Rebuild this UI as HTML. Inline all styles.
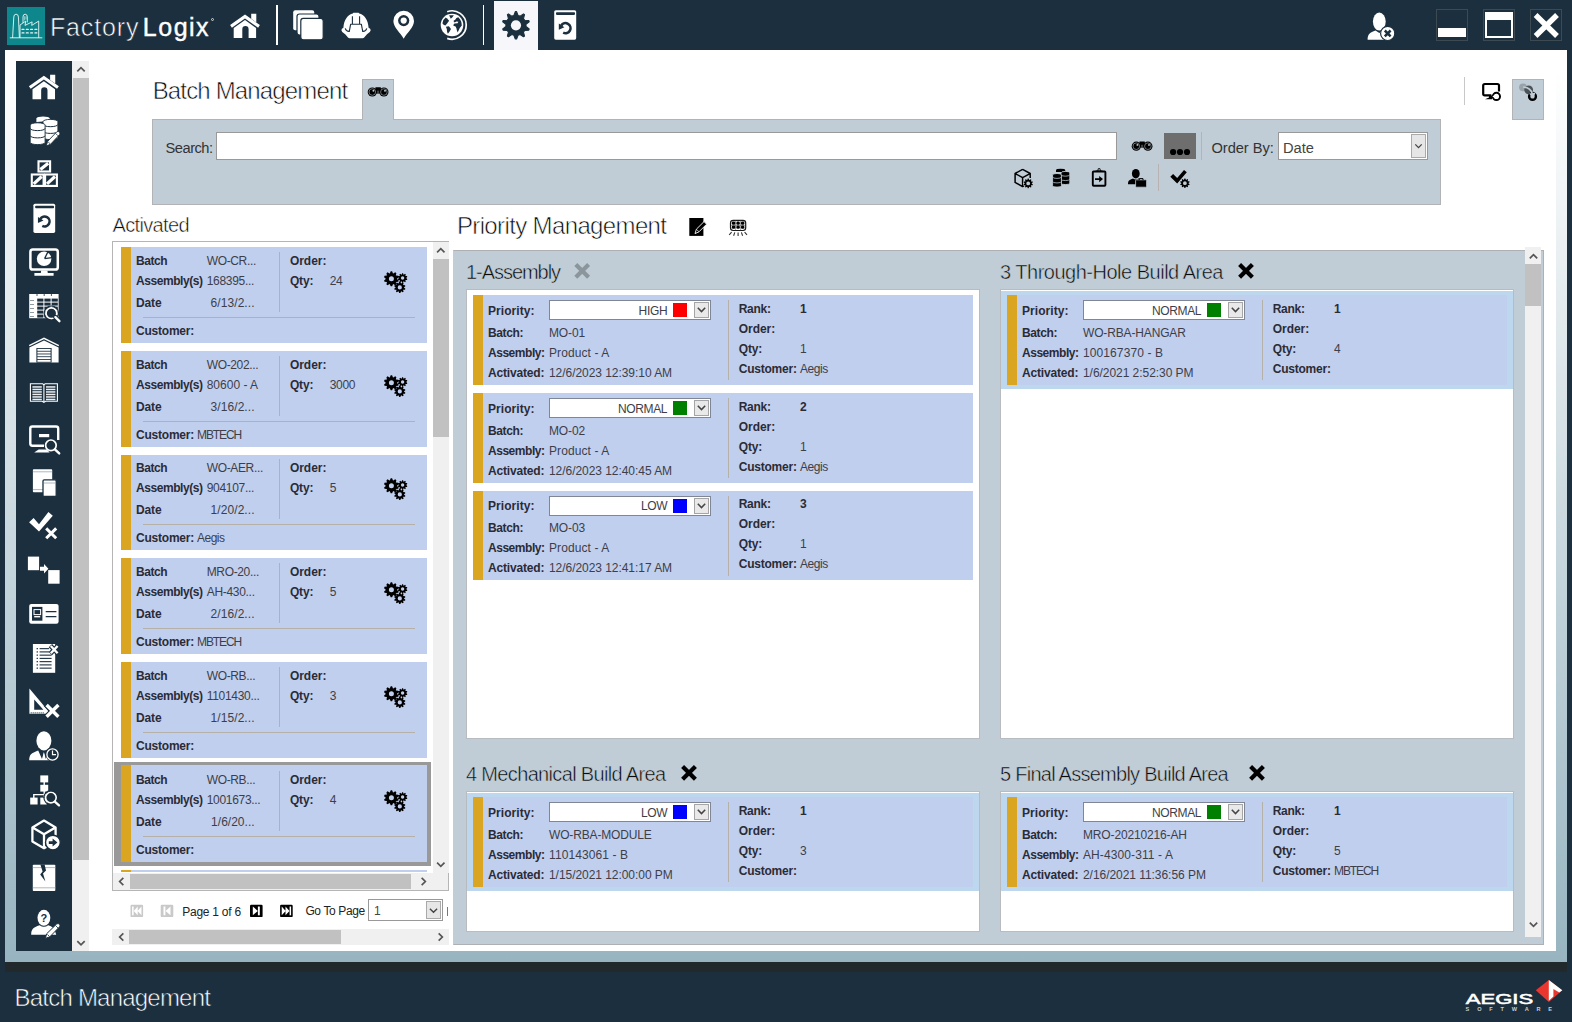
<!DOCTYPE html>
<html lang="en"><head><meta charset="utf-8"><title>FactoryLogix - Batch Management</title>
<style>
html,body{margin:0;padding:0}
body{width:1572px;height:1022px;background:#1b2f3e;position:relative;overflow:hidden;font-family:"Liberation Sans", sans-serif;font-size:12px;color:#222}
.a{position:absolute;box-sizing:border-box}
.t{position:absolute;white-space:nowrap;line-height:1}
svg{display:block;overflow:visible}
</style></head>
<body>
<div class="a" style="left:5px;top:50px;width:1562px;height:912px;background:linear-gradient(#ffffff 0%,#ffffff 2%,#97b4c0 100%);"></div>
<div class="a" style="left:16px;top:50px;width:1540px;height:901px;background:#fff;"></div>
<div class="a" style="left:5px;top:962px;width:1562px;height:10px;background:#21292c;"></div>
<div class="a" style="left:7px;top:7px;width:38px;height:38px;background:#0e878c;"></div>
<span class="t" style="left:50px;top:14.74px;font-size:25px;color:#ffffff;"><span style="color:#ffffff;letter-spacing:0.84px;-webkit-text-stroke:0.6px #1b2f3e">Factory</span><span style="-webkit-text-stroke:0.4px #fff;margin-left:3.6px;letter-spacing:1.5px">Logix</span></span>
<div class="a" style="left:211px;top:18px;width:3px;height:3px;border:1px solid #cfd6db;border-radius:50%;"></div>
<div class="a" style="left:276px;top:5px;width:1.6px;height:40px;background:#ffffff;"></div>
<div class="a" style="left:482.6px;top:5px;width:1.6px;height:40px;background:#ffffff;"></div>
<div class="a" style="left:494px;top:1px;width:44px;height:49px;background:#f7f7fb;"></div>
<div class="a" style="left:1436px;top:9px;width:32px;height:32px;border:1px solid #3e4a52;"></div>
<div class="a" style="left:1483px;top:9px;width:32px;height:32px;border:1px solid #3e4a52;"></div>
<div class="a" style="left:1530px;top:9px;width:32px;height:32px;border:1px solid #3e4a52;"></div>
<div class="a" style="left:1438px;top:28px;width:28px;height:9px;background:#fff;"></div>
<div class="a" style="left:1485px;top:12px;width:28px;height:26px;border:2px solid #fff;border-top-width:8px;"></div>
<div class="a" style="left:16px;top:61px;width:56px;height:890px;background:#1b2f3e;"></div>
<div class="a" style="left:72px;top:61px;width:17px;height:890px;background:#f0f0f0;"></div>
<div class="a" style="left:73px;top:78px;width:16px;height:782px;background:#c1c1c1;"></div>
<span class="t" style="left:152.7px;top:78.98px;font-size:24px;color:#0a0a0a;letter-spacing:-0.845px;-webkit-text-stroke:0.6px #fff;">Batch Management</span>
<div class="a" style="left:362px;top:79px;width:32px;height:41px;background:#c0cdd6;border:1px solid #b1b3b5;border-bottom:none;"></div>
<div class="a" style="left:152px;top:119px;width:1289px;height:86px;background:#c0cdd6;border:1px solid #b1b3b5;"></div>
<div class="a" style="left:363px;top:118px;width:30px;height:3px;background:#c0cdd6;"></div>
<span class="t" style="left:165.6px;top:140.98px;font-size:14.67px;color:#333;letter-spacing:-0.502px;">Search:</span>
<div class="a" style="left:216px;top:132px;width:901px;height:28px;background:#fff;border:1px solid #999;"></div>
<div class="a" style="left:1164px;top:133px;width:32px;height:26px;background:#6e6e6e;"></div>
<div class="a" style="left:1201px;top:132px;width:1px;height:28px;background:#b9b2b2;"></div>
<span class="t" style="left:1211.5px;top:140.98px;font-size:14.67px;color:#333;letter-spacing:-0.058px;">Order By:</span>
<div class="a" style="left:1278px;top:132px;width:150px;height:28px;background:#fff;border:1px solid #999;"></div>
<span class="t" style="left:1283px;top:140.98px;font-size:14.67px;color:#444;letter-spacing:0.008px;">Date</span>
<div class="a" style="left:1411px;top:134px;width:15px;height:24px;background:#e6e6e6;border:1px solid #aaa;"></div>
<div class="a" style="left:1158px;top:164px;width:1px;height:27px;background:#b9b2b2;"></div>
<div class="a" style="left:1464px;top:77px;width:1px;height:28px;background:#c8c8c8;"></div>
<div class="a" style="left:1512px;top:79px;width:32px;height:41px;background:#c0cdd6;border:1px solid #b1b3b5;"></div>
<span class="t" style="left:112.5px;top:214.87px;font-size:20px;color:#0a0a0a;letter-spacing:-0.652px;-webkit-text-stroke:0.5px #fff;">Activated</span>
<div class="a" style="left:112px;top:241px;width:337.4px;height:650px;background:#fff;border:1px solid #b5b5b5;"></div>
<div class="a" style="left:432.6px;top:242px;width:16px;height:631px;background:#f0f0f0;"></div>
<div class="a" style="left:433.4px;top:259px;width:15.2px;height:178px;background:#c1c1c1;"></div>
<div class="a" style="left:113px;top:873px;width:335.4px;height:17px;background:#f0f0f0;"></div>
<div class="a" style="left:130px;top:874px;width:281px;height:15px;background:#c1c1c1;"></div>
<div class="a" style="left:121px;top:247px;width:306px;height:95.6px;background:#c0cfee;"></div>
<div class="a" style="left:121px;top:247px;width:10px;height:95.6px;background:#daa520;"></div>
<div class="a" style="left:279px;top:252px;width:1px;height:60px;background:#b5b0a8;"></div>
<div class="a" style="left:143px;top:317px;width:272px;height:1px;background:#b5b0a8;"></div>
<span class="t" style="left:136px;top:255.14px;font-size:12px;font-weight:700;color:#2b2b36;letter-spacing:-0.469px;">Batch</span>
<span class="t" style="left:136px;top:275.14px;font-size:12px;font-weight:700;color:#2b2b36;letter-spacing:-0.443px;">Assembly(s)</span>
<span class="t" style="left:136px;top:296.84px;font-size:12px;font-weight:700;color:#2b2b36;letter-spacing:-0.129px;">Date</span>
<span class="t" style="left:136px;top:324.84px;font-size:12px;font-weight:700;color:#2b2b36;letter-spacing:-0.224px;">Customer:</span>
<span class="t" style="left:206.7px;top:255.14px;font-size:12px;color:#3e3e48;letter-spacing:-0.35px;">WO-CR...</span>
<span class="t" style="left:206.7px;top:275.14px;font-size:12px;color:#3e3e48;letter-spacing:-0.3px;">168395...</span>
<span class="t" style="left:210.6px;top:296.84px;font-size:12px;color:#3e3e48;letter-spacing:0.069px;">6/13/2...</span>
<span class="t" style="left:289.9px;top:255.14px;font-size:12px;font-weight:700;color:#2b2b36;letter-spacing:-0.031px;">Order:</span>
<span class="t" style="left:289.9px;top:275.14px;font-size:12px;font-weight:700;color:#2b2b36;letter-spacing:-0.125px;">Qty:</span>
<span class="t" style="left:329.8px;top:275.14px;font-size:12px;color:#3e3e48;letter-spacing:-0.35px;">24</span>
<div class="a" style="left:121px;top:351px;width:306px;height:95.6px;background:#c0cfee;"></div>
<div class="a" style="left:121px;top:351px;width:10px;height:95.6px;background:#daa520;"></div>
<div class="a" style="left:279px;top:356px;width:1px;height:60px;background:#b5b0a8;"></div>
<div class="a" style="left:143px;top:421px;width:272px;height:1px;background:#b5b0a8;"></div>
<span class="t" style="left:136px;top:359.14px;font-size:12px;font-weight:700;color:#2b2b36;letter-spacing:-0.469px;">Batch</span>
<span class="t" style="left:136px;top:379.14px;font-size:12px;font-weight:700;color:#2b2b36;letter-spacing:-0.443px;">Assembly(s)</span>
<span class="t" style="left:136px;top:400.84px;font-size:12px;font-weight:700;color:#2b2b36;letter-spacing:-0.129px;">Date</span>
<span class="t" style="left:136px;top:428.84px;font-size:12px;font-weight:700;color:#2b2b36;letter-spacing:-0.224px;">Customer:</span>
<span class="t" style="left:206.7px;top:359.14px;font-size:12px;color:#3e3e48;letter-spacing:-0.35px;">WO-202...</span>
<span class="t" style="left:206.7px;top:379.14px;font-size:12px;color:#3e3e48;letter-spacing:0.003px;">80600 - A</span>
<span class="t" style="left:210.6px;top:400.84px;font-size:12px;color:#3e3e48;letter-spacing:0.069px;">3/16/2...</span>
<span class="t" style="left:289.9px;top:359.14px;font-size:12px;font-weight:700;color:#2b2b36;letter-spacing:-0.031px;">Order:</span>
<span class="t" style="left:289.9px;top:379.14px;font-size:12px;font-weight:700;color:#2b2b36;letter-spacing:-0.125px;">Qty:</span>
<span class="t" style="left:329.8px;top:379.14px;font-size:12px;color:#3e3e48;letter-spacing:-0.35px;">3000</span>
<span class="t" style="left:197px;top:428.84px;font-size:12px;color:#3e3e48;letter-spacing:-1.079px;">MBTECH</span>
<div class="a" style="left:121px;top:454.5px;width:306px;height:95.6px;background:#c0cfee;"></div>
<div class="a" style="left:121px;top:454.5px;width:10px;height:95.6px;background:#daa520;"></div>
<div class="a" style="left:279px;top:459px;width:1px;height:60px;background:#b5b0a8;"></div>
<div class="a" style="left:143px;top:524px;width:272px;height:1px;background:#b5b0a8;"></div>
<span class="t" style="left:136px;top:462.14px;font-size:12px;font-weight:700;color:#2b2b36;letter-spacing:-0.469px;">Batch</span>
<span class="t" style="left:136px;top:482.14px;font-size:12px;font-weight:700;color:#2b2b36;letter-spacing:-0.443px;">Assembly(s)</span>
<span class="t" style="left:136px;top:503.84px;font-size:12px;font-weight:700;color:#2b2b36;letter-spacing:-0.129px;">Date</span>
<span class="t" style="left:136px;top:531.84px;font-size:12px;font-weight:700;color:#2b2b36;letter-spacing:-0.224px;">Customer:</span>
<span class="t" style="left:206.7px;top:462.14px;font-size:12px;color:#3e3e48;letter-spacing:-0.35px;">WO-AER...</span>
<span class="t" style="left:206.7px;top:482.14px;font-size:12px;color:#3e3e48;letter-spacing:-0.3px;">904107...</span>
<span class="t" style="left:210.6px;top:503.84px;font-size:12px;color:#3e3e48;letter-spacing:0.069px;">1/20/2...</span>
<span class="t" style="left:289.9px;top:462.14px;font-size:12px;font-weight:700;color:#2b2b36;letter-spacing:-0.031px;">Order:</span>
<span class="t" style="left:289.9px;top:482.14px;font-size:12px;font-weight:700;color:#2b2b36;letter-spacing:-0.125px;">Qty:</span>
<span class="t" style="left:329.8px;top:482.14px;font-size:12px;color:#3e3e48;letter-spacing:-0.35px;">5</span>
<span class="t" style="left:197px;top:531.84px;font-size:12px;color:#3e3e48;letter-spacing:-0.506px;">Aegis</span>
<div class="a" style="left:121px;top:558.2px;width:306px;height:95.6px;background:#c0cfee;"></div>
<div class="a" style="left:121px;top:558.2px;width:10px;height:95.6px;background:#daa520;"></div>
<div class="a" style="left:279px;top:563px;width:1px;height:60px;background:#b5b0a8;"></div>
<div class="a" style="left:143px;top:628px;width:272px;height:1px;background:#b5b0a8;"></div>
<span class="t" style="left:136px;top:566.14px;font-size:12px;font-weight:700;color:#2b2b36;letter-spacing:-0.469px;">Batch</span>
<span class="t" style="left:136px;top:586.14px;font-size:12px;font-weight:700;color:#2b2b36;letter-spacing:-0.443px;">Assembly(s)</span>
<span class="t" style="left:136px;top:607.84px;font-size:12px;font-weight:700;color:#2b2b36;letter-spacing:-0.129px;">Date</span>
<span class="t" style="left:136px;top:635.84px;font-size:12px;font-weight:700;color:#2b2b36;letter-spacing:-0.224px;">Customer:</span>
<span class="t" style="left:206.7px;top:566.14px;font-size:12px;color:#3e3e48;letter-spacing:-0.35px;">MRO-20...</span>
<span class="t" style="left:206.7px;top:586.14px;font-size:12px;color:#3e3e48;letter-spacing:-0.3px;">AH-430...</span>
<span class="t" style="left:210.6px;top:607.84px;font-size:12px;color:#3e3e48;letter-spacing:0.069px;">2/16/2...</span>
<span class="t" style="left:289.9px;top:566.14px;font-size:12px;font-weight:700;color:#2b2b36;letter-spacing:-0.031px;">Order:</span>
<span class="t" style="left:289.9px;top:586.14px;font-size:12px;font-weight:700;color:#2b2b36;letter-spacing:-0.125px;">Qty:</span>
<span class="t" style="left:329.8px;top:586.14px;font-size:12px;color:#3e3e48;letter-spacing:-0.35px;">5</span>
<span class="t" style="left:197px;top:635.84px;font-size:12px;color:#3e3e48;letter-spacing:-1.079px;">MBTECH</span>
<div class="a" style="left:121px;top:662.3px;width:306px;height:95.6px;background:#c0cfee;"></div>
<div class="a" style="left:121px;top:662.3px;width:10px;height:95.6px;background:#daa520;"></div>
<div class="a" style="left:279px;top:667px;width:1px;height:60px;background:#b5b0a8;"></div>
<div class="a" style="left:143px;top:732px;width:272px;height:1px;background:#b5b0a8;"></div>
<span class="t" style="left:136px;top:670.14px;font-size:12px;font-weight:700;color:#2b2b36;letter-spacing:-0.469px;">Batch</span>
<span class="t" style="left:136px;top:690.14px;font-size:12px;font-weight:700;color:#2b2b36;letter-spacing:-0.443px;">Assembly(s)</span>
<span class="t" style="left:136px;top:711.84px;font-size:12px;font-weight:700;color:#2b2b36;letter-spacing:-0.129px;">Date</span>
<span class="t" style="left:136px;top:739.84px;font-size:12px;font-weight:700;color:#2b2b36;letter-spacing:-0.224px;">Customer:</span>
<span class="t" style="left:206.7px;top:670.14px;font-size:12px;color:#3e3e48;letter-spacing:-0.35px;">WO-RB...</span>
<span class="t" style="left:206.7px;top:690.14px;font-size:12px;color:#3e3e48;letter-spacing:-0.3px;">1101430...</span>
<span class="t" style="left:210.6px;top:711.84px;font-size:12px;color:#3e3e48;letter-spacing:0.069px;">1/15/2...</span>
<span class="t" style="left:289.9px;top:670.14px;font-size:12px;font-weight:700;color:#2b2b36;letter-spacing:-0.031px;">Order:</span>
<span class="t" style="left:289.9px;top:690.14px;font-size:12px;font-weight:700;color:#2b2b36;letter-spacing:-0.125px;">Qty:</span>
<span class="t" style="left:329.8px;top:690.14px;font-size:12px;color:#3e3e48;letter-spacing:-0.35px;">3</span>
<div class="a" style="left:114px;top:762px;width:317px;height:104px;background:#999;"></div>
<div class="a" style="left:121px;top:765.2px;width:306px;height:96.8px;background:#c0cfee;"></div>
<div class="a" style="left:121px;top:765.2px;width:10px;height:96.8px;background:#daa520;"></div>
<div class="a" style="left:279px;top:771px;width:1px;height:60px;background:#b5b0a8;"></div>
<div class="a" style="left:143px;top:836px;width:272px;height:1px;background:#b5b0a8;"></div>
<span class="t" style="left:136px;top:774.14px;font-size:12px;font-weight:700;color:#2b2b36;letter-spacing:-0.469px;">Batch</span>
<span class="t" style="left:136px;top:794.14px;font-size:12px;font-weight:700;color:#2b2b36;letter-spacing:-0.443px;">Assembly(s)</span>
<span class="t" style="left:136px;top:815.84px;font-size:12px;font-weight:700;color:#2b2b36;letter-spacing:-0.129px;">Date</span>
<span class="t" style="left:136px;top:843.84px;font-size:12px;font-weight:700;color:#2b2b36;letter-spacing:-0.224px;">Customer:</span>
<span class="t" style="left:206.7px;top:774.14px;font-size:12px;color:#3e3e48;letter-spacing:-0.35px;">WO-RB...</span>
<span class="t" style="left:206.7px;top:794.14px;font-size:12px;color:#3e3e48;letter-spacing:-0.3px;">1001673...</span>
<span class="t" style="left:211.1px;top:815.84px;font-size:12px;color:#3e3e48;letter-spacing:0.014px;">1/6/20...</span>
<span class="t" style="left:289.9px;top:774.14px;font-size:12px;font-weight:700;color:#2b2b36;letter-spacing:-0.031px;">Order:</span>
<span class="t" style="left:289.9px;top:794.14px;font-size:12px;font-weight:700;color:#2b2b36;letter-spacing:-0.125px;">Qty:</span>
<span class="t" style="left:329.8px;top:794.14px;font-size:12px;color:#3e3e48;letter-spacing:-0.35px;">4</span>
<div class="a" style="left:121px;top:870px;width:306px;height:2px;background:#c0cfee;"></div>
<div class="a" style="left:121px;top:870px;width:10px;height:2px;background:#daa520;"></div>
<span class="t" style="left:182.3px;top:905.64px;font-size:12px;color:#222;letter-spacing:-0.263px;">Page 1 of 6</span>
<span class="t" style="left:305.4px;top:904.84px;font-size:12px;color:#222;letter-spacing:-0.367px;">Go To Page</span>
<div class="a" style="left:368px;top:899px;width:75px;height:22px;background:#fff;border:1px solid #999;"></div>
<span class="t" style="left:374px;top:904.84px;font-size:12px;color:#444;">1</span>
<div class="a" style="left:426px;top:901px;width:15px;height:18px;background:#e6e6e6;border:1px solid #aaa;"></div>
<div class="a" style="left:447px;top:907px;width:1px;height:9px;background:#c0603a;"></div>
<div class="a" style="left:112px;top:929px;width:337px;height:16px;background:#f0f0f0;"></div>
<div class="a" style="left:129px;top:930px;width:212px;height:14px;background:#c1c1c1;"></div>
<span class="t" style="left:456.9px;top:214.28px;font-size:24px;color:#0a0a0a;letter-spacing:-0.628px;-webkit-text-stroke:0.6px #fff;">Priority Management</span>
<div class="a" style="left:453px;top:250px;width:1091px;height:695px;background:#c0cdd6;border:1px solid #adb1b4;border-left-color:#c0cdd6;"></div>
<div class="a" style="left:1525px;top:247px;width:16px;height:690px;background:#f0f0f0;"></div>
<div class="a" style="left:1525px;top:264px;width:16px;height:42px;background:#c1c1c1;"></div>
<span class="t" style="left:466px;top:261.77px;font-size:20px;color:#0a0a0a;letter-spacing:-1.048px;-webkit-text-stroke:0.5px #c0cdd6;">1-Assembly</span>
<div class="a" style="left:466px;top:289px;width:514px;height:450px;background:#fff;border:1px solid #b8bcc0;"></div>
<div class="a" style="left:473px;top:295px;width:500px;height:89.7px;background:#c0cfee;"></div>
<div class="a" style="left:473px;top:295px;width:10px;height:89.7px;background:#daa520;"></div>
<div class="a" style="left:727.6px;top:300px;width:1px;height:80px;background:#b5b0a8;"></div>
<span class="t" style="left:488px;top:305.24px;font-size:12px;font-weight:700;color:#2b2b36;letter-spacing:0.054px;">Priority:</span>
<span class="t" style="left:488px;top:327.14px;font-size:12px;font-weight:700;color:#2b2b36;letter-spacing:-0.391px;">Batch:</span>
<span class="t" style="left:488px;top:347.24px;font-size:12px;font-weight:700;color:#2b2b36;letter-spacing:-0.467px;">Assembly:</span>
<span class="t" style="left:488px;top:366.64px;font-size:12px;font-weight:700;color:#2b2b36;letter-spacing:-0.172px;">Activated:</span>
<div class="a" style="left:549px;top:300px;width:162px;height:20px;background:#fff;border:1px solid #7f8797;"></div>
<span class="t" style="right:904.8px;top:305.24px;font-size:12px;color:#3e3e48;letter-spacing:-0.35px;">HIGH</span>
<div class="a" style="left:673px;top:303px;width:14px;height:14px;background:#ff0000;"></div>
<div class="a" style="left:694px;top:301.8px;width:15px;height:16.2px;background:#e9e9e9;border:1px solid #a5a5a5;"></div>
<svg class="a" style="left:697px;top:307px;" width="9" height="6" viewBox="0 0 9 6"><path d="M0.8 0.8 L4.5 4.6 L8.2 0.8" fill="none" stroke="#444" stroke-width="1.5"/></svg>
<span class="t" style="left:549px;top:327.14px;font-size:12px;color:#3e3e48;letter-spacing:-0.15px;">MO-01</span>
<span class="t" style="left:549px;top:347.24px;font-size:12px;color:#3e3e48;letter-spacing:0.1px;">Product - A</span>
<span class="t" style="left:549px;top:366.64px;font-size:12px;color:#3e3e48;letter-spacing:-0.05px;">12/6/2023 12:39:10 AM</span>
<span class="t" style="left:738.7px;top:303.04px;font-size:12px;font-weight:700;color:#2b2b36;letter-spacing:-0.269px;">Rank:</span>
<span class="t" style="left:738.7px;top:323.04px;font-size:12px;font-weight:700;color:#2b2b36;letter-spacing:-0.031px;">Order:</span>
<span class="t" style="left:738.7px;top:342.84px;font-size:12px;font-weight:700;color:#2b2b36;letter-spacing:-0.125px;">Qty:</span>
<span class="t" style="left:738.7px;top:362.84px;font-size:12px;font-weight:700;color:#2b2b36;letter-spacing:-0.224px;">Customer:</span>
<span class="t" style="left:800px;top:303.04px;font-size:12px;font-weight:700;color:#2b2b36;">1</span>
<span class="t" style="left:800px;top:342.84px;font-size:12px;color:#3e3e48;">1</span>
<span class="t" style="left:800px;top:362.84px;font-size:12px;color:#3e3e48;letter-spacing:-0.446px;">Aegis</span>
<div class="a" style="left:473px;top:393.3px;width:500px;height:89.4px;background:#c0cfee;"></div>
<div class="a" style="left:473px;top:393.3px;width:10px;height:89.4px;background:#daa520;"></div>
<div class="a" style="left:727.6px;top:398.3px;width:1px;height:80px;background:#b5b0a8;"></div>
<span class="t" style="left:488px;top:403.34px;font-size:12px;font-weight:700;color:#2b2b36;letter-spacing:0.054px;">Priority:</span>
<span class="t" style="left:488px;top:425.24px;font-size:12px;font-weight:700;color:#2b2b36;letter-spacing:-0.391px;">Batch:</span>
<span class="t" style="left:488px;top:445.34px;font-size:12px;font-weight:700;color:#2b2b36;letter-spacing:-0.467px;">Assembly:</span>
<span class="t" style="left:488px;top:464.74px;font-size:12px;font-weight:700;color:#2b2b36;letter-spacing:-0.172px;">Activated:</span>
<div class="a" style="left:549px;top:398.3px;width:162px;height:20px;background:#fff;border:1px solid #7f8797;"></div>
<span class="t" style="right:904.8px;top:403.34px;font-size:12px;color:#3e3e48;letter-spacing:-0.35px;">NORMAL</span>
<div class="a" style="left:673px;top:401.3px;width:14px;height:14px;background:#008000;"></div>
<div class="a" style="left:694px;top:400.1px;width:15px;height:16.2px;background:#e9e9e9;border:1px solid #a5a5a5;"></div>
<svg class="a" style="left:697px;top:405.3px;" width="9" height="6" viewBox="0 0 9 6"><path d="M0.8 0.8 L4.5 4.6 L8.2 0.8" fill="none" stroke="#444" stroke-width="1.5"/></svg>
<span class="t" style="left:549px;top:425.24px;font-size:12px;color:#3e3e48;letter-spacing:-0.15px;">MO-02</span>
<span class="t" style="left:549px;top:445.34px;font-size:12px;color:#3e3e48;letter-spacing:0.1px;">Product - A</span>
<span class="t" style="left:549px;top:464.74px;font-size:12px;color:#3e3e48;letter-spacing:-0.05px;">12/6/2023 12:40:45 AM</span>
<span class="t" style="left:738.7px;top:401.14px;font-size:12px;font-weight:700;color:#2b2b36;letter-spacing:-0.269px;">Rank:</span>
<span class="t" style="left:738.7px;top:421.14px;font-size:12px;font-weight:700;color:#2b2b36;letter-spacing:-0.031px;">Order:</span>
<span class="t" style="left:738.7px;top:440.94px;font-size:12px;font-weight:700;color:#2b2b36;letter-spacing:-0.125px;">Qty:</span>
<span class="t" style="left:738.7px;top:460.94px;font-size:12px;font-weight:700;color:#2b2b36;letter-spacing:-0.224px;">Customer:</span>
<span class="t" style="left:800px;top:401.14px;font-size:12px;font-weight:700;color:#2b2b36;">2</span>
<span class="t" style="left:800px;top:440.94px;font-size:12px;color:#3e3e48;">1</span>
<span class="t" style="left:800px;top:460.94px;font-size:12px;color:#3e3e48;letter-spacing:-0.446px;">Aegis</span>
<div class="a" style="left:473px;top:491.3px;width:500px;height:88.3px;background:#c0cfee;"></div>
<div class="a" style="left:473px;top:491.3px;width:10px;height:88.3px;background:#daa520;"></div>
<div class="a" style="left:727.6px;top:496.3px;width:1px;height:80px;background:#b5b0a8;"></div>
<span class="t" style="left:488px;top:500.44px;font-size:12px;font-weight:700;color:#2b2b36;letter-spacing:0.054px;">Priority:</span>
<span class="t" style="left:488px;top:522.34px;font-size:12px;font-weight:700;color:#2b2b36;letter-spacing:-0.391px;">Batch:</span>
<span class="t" style="left:488px;top:542.44px;font-size:12px;font-weight:700;color:#2b2b36;letter-spacing:-0.467px;">Assembly:</span>
<span class="t" style="left:488px;top:561.84px;font-size:12px;font-weight:700;color:#2b2b36;letter-spacing:-0.172px;">Activated:</span>
<div class="a" style="left:549px;top:496.3px;width:162px;height:20px;background:#fff;border:1px solid #7f8797;"></div>
<span class="t" style="right:904.8px;top:500.44px;font-size:12px;color:#3e3e48;letter-spacing:-0.35px;">LOW</span>
<div class="a" style="left:673px;top:499.3px;width:14px;height:14px;background:#0000ff;"></div>
<div class="a" style="left:694px;top:498.1px;width:15px;height:16.2px;background:#e9e9e9;border:1px solid #a5a5a5;"></div>
<svg class="a" style="left:697px;top:503.3px;" width="9" height="6" viewBox="0 0 9 6"><path d="M0.8 0.8 L4.5 4.6 L8.2 0.8" fill="none" stroke="#444" stroke-width="1.5"/></svg>
<span class="t" style="left:549px;top:522.34px;font-size:12px;color:#3e3e48;letter-spacing:-0.15px;">MO-03</span>
<span class="t" style="left:549px;top:542.44px;font-size:12px;color:#3e3e48;letter-spacing:0.1px;">Product - A</span>
<span class="t" style="left:549px;top:561.84px;font-size:12px;color:#3e3e48;letter-spacing:-0.05px;">12/6/2023 12:41:17 AM</span>
<span class="t" style="left:738.7px;top:498.24px;font-size:12px;font-weight:700;color:#2b2b36;letter-spacing:-0.269px;">Rank:</span>
<span class="t" style="left:738.7px;top:518.24px;font-size:12px;font-weight:700;color:#2b2b36;letter-spacing:-0.031px;">Order:</span>
<span class="t" style="left:738.7px;top:538.04px;font-size:12px;font-weight:700;color:#2b2b36;letter-spacing:-0.125px;">Qty:</span>
<span class="t" style="left:738.7px;top:558.04px;font-size:12px;font-weight:700;color:#2b2b36;letter-spacing:-0.224px;">Customer:</span>
<span class="t" style="left:800px;top:498.24px;font-size:12px;font-weight:700;color:#2b2b36;">3</span>
<span class="t" style="left:800px;top:538.04px;font-size:12px;color:#3e3e48;">1</span>
<span class="t" style="left:800px;top:558.04px;font-size:12px;color:#3e3e48;letter-spacing:-0.446px;">Aegis</span>
<span class="t" style="left:1000px;top:261.77px;font-size:20px;color:#0a0a0a;letter-spacing:-0.494px;-webkit-text-stroke:0.5px #c0cdd6;">3 Through-Hole Build Area</span>
<div class="a" style="left:1000px;top:289px;width:514px;height:450px;background:#fff;border:1px solid #b8bcc0;"></div>
<div class="a" style="left:1001px;top:290.5px;width:512px;height:98.5px;background:#bdd7ee;"></div>
<div class="a" style="left:1007px;top:295px;width:500px;height:89.7px;background:#c0cfee;"></div>
<div class="a" style="left:1007px;top:295px;width:10px;height:89.7px;background:#daa520;"></div>
<div class="a" style="left:1261.6px;top:300px;width:1px;height:80px;background:#b5b0a8;"></div>
<span class="t" style="left:1022px;top:305.24px;font-size:12px;font-weight:700;color:#2b2b36;letter-spacing:0.054px;">Priority:</span>
<span class="t" style="left:1022px;top:327.14px;font-size:12px;font-weight:700;color:#2b2b36;letter-spacing:-0.391px;">Batch:</span>
<span class="t" style="left:1022px;top:347.24px;font-size:12px;font-weight:700;color:#2b2b36;letter-spacing:-0.467px;">Assembly:</span>
<span class="t" style="left:1022px;top:366.64px;font-size:12px;font-weight:700;color:#2b2b36;letter-spacing:-0.172px;">Activated:</span>
<div class="a" style="left:1083px;top:300px;width:162px;height:20px;background:#fff;border:1px solid #7f8797;"></div>
<span class="t" style="right:370.79999999999995px;top:305.24px;font-size:12px;color:#3e3e48;letter-spacing:-0.35px;">NORMAL</span>
<div class="a" style="left:1207px;top:303px;width:14px;height:14px;background:#008000;"></div>
<div class="a" style="left:1228px;top:301.8px;width:15px;height:16.2px;background:#e9e9e9;border:1px solid #a5a5a5;"></div>
<svg class="a" style="left:1231px;top:307px;" width="9" height="6" viewBox="0 0 9 6"><path d="M0.8 0.8 L4.5 4.6 L8.2 0.8" fill="none" stroke="#444" stroke-width="1.5"/></svg>
<span class="t" style="left:1083px;top:327.14px;font-size:12px;color:#3e3e48;letter-spacing:-0.15px;">WO-RBA-HANGAR</span>
<span class="t" style="left:1083px;top:347.24px;font-size:12px;color:#3e3e48;letter-spacing:0.1px;">100167370 - B</span>
<span class="t" style="left:1083px;top:366.64px;font-size:12px;color:#3e3e48;letter-spacing:-0.05px;">1/6/2021 2:52:30 PM</span>
<span class="t" style="left:1272.7px;top:303.04px;font-size:12px;font-weight:700;color:#2b2b36;letter-spacing:-0.269px;">Rank:</span>
<span class="t" style="left:1272.7px;top:323.04px;font-size:12px;font-weight:700;color:#2b2b36;letter-spacing:-0.031px;">Order:</span>
<span class="t" style="left:1272.7px;top:342.84px;font-size:12px;font-weight:700;color:#2b2b36;letter-spacing:-0.125px;">Qty:</span>
<span class="t" style="left:1272.7px;top:362.84px;font-size:12px;font-weight:700;color:#2b2b36;letter-spacing:-0.224px;">Customer:</span>
<span class="t" style="left:1334px;top:303.04px;font-size:12px;font-weight:700;color:#2b2b36;">1</span>
<span class="t" style="left:1334px;top:342.84px;font-size:12px;color:#3e3e48;">4</span>
<span class="t" style="left:466px;top:763.77px;font-size:20px;color:#0a0a0a;letter-spacing:-0.660px;-webkit-text-stroke:0.5px #c0cdd6;">4 Mechanical Build Area</span>
<div class="a" style="left:466px;top:791px;width:514px;height:141px;background:#fff;border:1px solid #b8bcc0;"></div>
<div class="a" style="left:467px;top:792.5px;width:512px;height:98.5px;background:#bdd7ee;"></div>
<div class="a" style="left:473px;top:797px;width:500px;height:89.7px;background:#c0cfee;"></div>
<div class="a" style="left:473px;top:797px;width:10px;height:89.7px;background:#daa520;"></div>
<div class="a" style="left:727.6px;top:802px;width:1px;height:80px;background:#b5b0a8;"></div>
<span class="t" style="left:488px;top:807.24px;font-size:12px;font-weight:700;color:#2b2b36;letter-spacing:0.054px;">Priority:</span>
<span class="t" style="left:488px;top:829.14px;font-size:12px;font-weight:700;color:#2b2b36;letter-spacing:-0.391px;">Batch:</span>
<span class="t" style="left:488px;top:849.24px;font-size:12px;font-weight:700;color:#2b2b36;letter-spacing:-0.467px;">Assembly:</span>
<span class="t" style="left:488px;top:868.64px;font-size:12px;font-weight:700;color:#2b2b36;letter-spacing:-0.172px;">Activated:</span>
<div class="a" style="left:549px;top:802px;width:162px;height:20px;background:#fff;border:1px solid #7f8797;"></div>
<span class="t" style="right:904.8px;top:807.24px;font-size:12px;color:#3e3e48;letter-spacing:-0.35px;">LOW</span>
<div class="a" style="left:673px;top:805px;width:14px;height:14px;background:#0000ff;"></div>
<div class="a" style="left:694px;top:803.8px;width:15px;height:16.2px;background:#e9e9e9;border:1px solid #a5a5a5;"></div>
<svg class="a" style="left:697px;top:809px;" width="9" height="6" viewBox="0 0 9 6"><path d="M0.8 0.8 L4.5 4.6 L8.2 0.8" fill="none" stroke="#444" stroke-width="1.5"/></svg>
<span class="t" style="left:549px;top:829.14px;font-size:12px;color:#3e3e48;letter-spacing:-0.15px;">WO-RBA-MODULE</span>
<span class="t" style="left:549px;top:849.24px;font-size:12px;color:#3e3e48;letter-spacing:0.1px;">110143061 - B</span>
<span class="t" style="left:549px;top:868.64px;font-size:12px;color:#3e3e48;letter-spacing:-0.05px;">1/15/2021 12:00:00 PM</span>
<span class="t" style="left:738.7px;top:805.04px;font-size:12px;font-weight:700;color:#2b2b36;letter-spacing:-0.269px;">Rank:</span>
<span class="t" style="left:738.7px;top:825.04px;font-size:12px;font-weight:700;color:#2b2b36;letter-spacing:-0.031px;">Order:</span>
<span class="t" style="left:738.7px;top:844.84px;font-size:12px;font-weight:700;color:#2b2b36;letter-spacing:-0.125px;">Qty:</span>
<span class="t" style="left:738.7px;top:864.84px;font-size:12px;font-weight:700;color:#2b2b36;letter-spacing:-0.224px;">Customer:</span>
<span class="t" style="left:800px;top:805.04px;font-size:12px;font-weight:700;color:#2b2b36;">1</span>
<span class="t" style="left:800px;top:844.84px;font-size:12px;color:#3e3e48;">3</span>
<span class="t" style="left:1000px;top:763.77px;font-size:20px;color:#0a0a0a;letter-spacing:-0.737px;-webkit-text-stroke:0.5px #c0cdd6;">5 Final Assembly Build Area</span>
<div class="a" style="left:1000px;top:791px;width:514px;height:141px;background:#fff;border:1px solid #b8bcc0;"></div>
<div class="a" style="left:1001px;top:792.5px;width:512px;height:98.5px;background:#bdd7ee;"></div>
<div class="a" style="left:1007px;top:797px;width:500px;height:89.7px;background:#c0cfee;"></div>
<div class="a" style="left:1007px;top:797px;width:10px;height:89.7px;background:#daa520;"></div>
<div class="a" style="left:1261.6px;top:802px;width:1px;height:80px;background:#b5b0a8;"></div>
<span class="t" style="left:1022px;top:807.24px;font-size:12px;font-weight:700;color:#2b2b36;letter-spacing:0.054px;">Priority:</span>
<span class="t" style="left:1022px;top:829.14px;font-size:12px;font-weight:700;color:#2b2b36;letter-spacing:-0.391px;">Batch:</span>
<span class="t" style="left:1022px;top:849.24px;font-size:12px;font-weight:700;color:#2b2b36;letter-spacing:-0.467px;">Assembly:</span>
<span class="t" style="left:1022px;top:868.64px;font-size:12px;font-weight:700;color:#2b2b36;letter-spacing:-0.172px;">Activated:</span>
<div class="a" style="left:1083px;top:802px;width:162px;height:20px;background:#fff;border:1px solid #7f8797;"></div>
<span class="t" style="right:370.79999999999995px;top:807.24px;font-size:12px;color:#3e3e48;letter-spacing:-0.35px;">NORMAL</span>
<div class="a" style="left:1207px;top:805px;width:14px;height:14px;background:#008000;"></div>
<div class="a" style="left:1228px;top:803.8px;width:15px;height:16.2px;background:#e9e9e9;border:1px solid #a5a5a5;"></div>
<svg class="a" style="left:1231px;top:809px;" width="9" height="6" viewBox="0 0 9 6"><path d="M0.8 0.8 L4.5 4.6 L8.2 0.8" fill="none" stroke="#444" stroke-width="1.5"/></svg>
<span class="t" style="left:1083px;top:829.14px;font-size:12px;color:#3e3e48;letter-spacing:-0.15px;">MRO-20210216-AH</span>
<span class="t" style="left:1083px;top:849.24px;font-size:12px;color:#3e3e48;letter-spacing:0.1px;">AH-4300-311 - A</span>
<span class="t" style="left:1083px;top:868.64px;font-size:12px;color:#3e3e48;letter-spacing:-0.05px;">2/16/2021 11:36:56 PM</span>
<span class="t" style="left:1272.7px;top:805.04px;font-size:12px;font-weight:700;color:#2b2b36;letter-spacing:-0.269px;">Rank:</span>
<span class="t" style="left:1272.7px;top:825.04px;font-size:12px;font-weight:700;color:#2b2b36;letter-spacing:-0.031px;">Order:</span>
<span class="t" style="left:1272.7px;top:844.84px;font-size:12px;font-weight:700;color:#2b2b36;letter-spacing:-0.125px;">Qty:</span>
<span class="t" style="left:1272.7px;top:864.84px;font-size:12px;font-weight:700;color:#2b2b36;letter-spacing:-0.224px;">Customer:</span>
<span class="t" style="left:1334px;top:805.04px;font-size:12px;font-weight:700;color:#2b2b36;">1</span>
<span class="t" style="left:1334px;top:844.84px;font-size:12px;color:#3e3e48;">5</span>
<span class="t" style="left:1334px;top:864.84px;font-size:12px;color:#3e3e48;letter-spacing:-1.079px;">MBTECH</span>
<span class="t" style="left:14.6px;top:985.68px;font-size:24px;color:#ffffff;letter-spacing:-0.789px;-webkit-text-stroke:0.6px #1b2f3e;">Batch Management</span>
<svg class="a" style="left:0;top:0" width="1572" height="1022" viewBox="0 0 1572 1022"><g transform="translate(7 7) scale(1)"><g fill="none" stroke="#e9f6f6" stroke-width="0.9" stroke-linecap="round" stroke-linejoin="round">
<path d="M3.2 30.8 H34.9"/>
<path d="M5.6 30.6 L6.8 10 Q6.9 7.2 9.1 7.2 Q11.3 7.2 11.4 10 L12.4 30.6"/>
<path d="M16 15.6 V10 Q16 7.2 18.1 7.2 Q20.3 7.2 20.3 10 V15"/>
<path d="M17.6 13 V9.6 M19 12 V9.8" stroke-width="0.6"/>
<path d="M13 30.6 V18 L18.8 14.1 L18 18.4 L25.1 14.9 L24.7 18.4 L31.7 14.1 V30.6"/>
<path d="M15 22.4 h2 M19.3 22.4 h2 M23.6 22.4 h2 M27.9 22.4 h2 M15 25.9 h2 M19.3 25.9 h2 M23.6 25.9 h2 M27.9 25.9 h2" stroke-width="1.1"/>
</g></g>
<g transform="translate(230 13.7) scale(1)"><path d="M15 0.9 L0.1 11.4 L1.9 14 L15 4.8 L28.1 14 L29.9 11.4 Z" fill="#fff"/>
<path d="M21.2 0 H26.3 V8.7 L21.2 5.1 Z" fill="#fff"/>
<path d="M15 6.4 L3.7 14.4 V24.3 H12.3 V15.6 Q12.3 12.4 15.45 12.4 Q18.6 12.4 18.6 15.6 V24.3 H26.1 V14.4 Z" fill="#fff"/></g>
<g transform="translate(28.8 74.8) scale(1.005)"><path d="M15 0.9 L0.1 11.4 L1.9 14 L15 4.8 L28.1 14 L29.9 11.4 Z" fill="#fff"/>
<path d="M21.2 0 H26.3 V8.7 L21.2 5.1 Z" fill="#fff"/>
<path d="M15 6.4 L3.7 14.4 V24.3 H12.3 V15.6 Q12.3 12.4 15.45 12.4 Q18.6 12.4 18.6 15.6 V24.3 H26.1 V14.4 Z" fill="#fff"/></g>
<g transform="translate(0 0) scale(1)"><rect x="293.2" y="10.2" width="21" height="20" rx="2" fill="#fff"/>
<rect x="297" y="14" width="22" height="21" rx="2.5" fill="#fff" stroke="#1b2f3e" stroke-width="1.2"/>
<rect x="300.8" y="18.4" width="22.4" height="21.4" rx="2.5" fill="#fff" stroke="#1b2f3e" stroke-width="1.2"/></g>
<g transform="translate(0 0) scale(1)"><path d="M341.4 30.2 Q341.4 28.6 343.4 27.8 C343.8 19.5 348 14.2 352.8 13.4 L353.4 12.7 H358.6 L359.2 13.4 C364 14.2 368.2 19.5 368.6 27.8 Q370.7 28.6 370.7 30.2 Q370.4 32.4 367 34.2 L364.2 37.6 Q363.6 38.3 362.6 38.3 H349.6 Q348.6 38.3 348 37.6 L345.2 34.2 Q341.6 32.4 341.4 30.2 Z" fill="#fff"/>
<path d="M352.4 16.2 V24.3 M359.6 16.2 V24.3 M350.4 24.3 H361.6 M350.6 24.3 L349.3 31.4 Q346.2 31.6 345.2 28.4 M361.4 24.3 L362.7 31.4 Q365.8 31.6 366.8 28.4" fill="none" stroke="#1b2f3e" stroke-width="1.1"/></g>
<g transform="translate(0 0) scale(1)"><path d="M403.7 38.8 C400 32 393.4 27.5 393.4 21 A10.3 10.3 0 0 1 414 21 C414 27.5 407.4 32 403.7 38.8 Z" fill="#fff"/>
<circle cx="403.7" cy="20.6" r="5.6" fill="#1b2f3e"/><circle cx="403.7" cy="20.6" r="3.1" fill="#fff"/></g>
<g transform="translate(0 0) scale(1)"><circle cx="452" cy="25.05" r="11.3" fill="#fff"/>
<path d="M447.2 11.7 A14.2 14.2 0 1 1 447.2 38.4" fill="none" stroke="#fff" stroke-width="1.7"/>
<path d="M442.4 23.2 L443.4 20 L445.7 17.5 L447.1 18.4 L449.1 20.7 L447.3 23.2 L445.4 25.5 L443.6 24.8 Z" fill="#1b2f3e"/>
<path d="M449.1 15.3 H453.8 L452.6 17 L450.8 18.8 Z" fill="#1b2f3e"/>
<path d="M445.9 26.8 L448.9 26.3 L451 28.9 L449.6 31.6 L447.9 33.7 L447.1 32 L446.8 29 Z" fill="#1b2f3e"/>
<path d="M455.4 19.4 L456.4 17.9 L458.3 17.2 L460.2 19.6 L461.4 22.2 L461.8 25.4 L459.8 28.1 L458.6 30.6 L457.7 32.5 L456.9 30.6 L456.5 28.4 L455.6 26.6 L453.4 25.7 L453.7 24.2 L454.6 23.6 L457.6 23.2 L458.4 21.8 L456.4 21.4 L454.6 22.4 L453.4 21 Z" fill="#1b2f3e"/></g>
<g transform="translate(0 0) scale(1)"><path d="M513.88 15.47 L515.31 11.67 L516.61 11.67 L518.04 15.47 L520.09 16.13 L523.48 13.90 L524.53 14.66 L523.45 18.58 L524.72 20.32 L528.78 20.51 L529.17 21.73 L526.00 24.27 L526.00 26.43 L529.17 28.97 L528.78 30.19 L524.72 30.38 L523.45 32.12 L524.53 36.04 L523.48 36.80 L520.09 34.57 L518.04 35.23 L516.61 39.03 L515.31 39.03 L513.88 35.23 L511.83 34.57 L508.44 36.80 L507.39 36.04 L508.47 32.12 L507.20 30.38 L503.14 30.19 L502.75 28.97 L505.92 26.43 L505.92 24.27 L502.75 21.73 L503.14 20.51 L507.20 20.32 L508.47 18.58 L507.39 14.66 L508.44 13.90 L511.83 16.13 Z" fill="#1b2f3e" stroke="#1b2f3e" stroke-width="1.1" stroke-linejoin="round"/><circle cx="515.96" cy="25.35" r="5.1" fill="#f7f7fb"/></g>
<g transform="translate(554 10) scale(1)"><rect x="0.2" y="0.2" width="22" height="29.5" rx="1.6" fill="#fff"/>
<rect x="2" y="2.2" width="19" height="2.7" rx="0.8" fill="#1b2f3e"/>
<path d="M7.2 15.6 A5 5 0 1 1 9.2 22.6" fill="none" stroke="#1b2f3e" stroke-width="2.6"/>
<path d="M4.8 13.6 V19.8 L10.4 17.2 Z" fill="#1b2f3e"/></g>
<g transform="translate(33.2 203.5) scale(0.99)"><rect x="0.2" y="0.2" width="22" height="29.5" rx="1.6" fill="#fff"/>
<rect x="2" y="2.2" width="19" height="2.7" rx="0.8" fill="#1b2f3e"/>
<path d="M7.2 15.6 A5 5 0 1 1 9.2 22.6" fill="none" stroke="#1b2f3e" stroke-width="2.6"/>
<path d="M4.8 13.6 V19.8 L10.4 17.2 Z" fill="#1b2f3e"/></g>
<g transform="translate(0 0) scale(1)"><ellipse cx="1379.3" cy="21.6" rx="6.4" ry="9" fill="#fff"/>
<path d="M1367.6 39.8 C1367.6 34 1370 32.5 1375.5 30.5 L1379.3 33 L1383 30.5 C1388 32 1390 34 1390 39.8 Z" fill="#fff"/>
<circle cx="1387.7" cy="33.4" r="7.1" fill="#fff" stroke="#1b2f3e" stroke-width="1.2"/>
<path d="M1384.8 30.5 L1390.6 36.3 M1390.6 30.5 L1384.8 36.3" stroke="#1b2f3e" stroke-width="2.5"/></g>
<g transform="translate(0 0) scale(1)"><path d="M1535.6 15 L1557 36 M1557 15 L1535.6 36" stroke="#fff" stroke-width="5.4"/></g>
<g transform="translate(0 0) scale(1)"><path d="M36.4 122 V118.4 A6.8 2.4 0 0 1 49.8 118.4 V121 Z" fill="#fff"/>
<path d="M43 121.60000000000001 A7.45 2.2 0 0 1 57.9 121.60000000000001 V137.4 A7.45 2.2 0 0 1 43 137.4 Z" fill="#fff" stroke="#1b2f3e" stroke-width="0.9"/><path d="M43 124.48333333333333 A7.45 2.2 0 0 0 57.9 124.48333333333333" fill="none" stroke="#1b2f3e" stroke-width="1.0"/><path d="M43 131.21666666666667 A7.45 2.2 0 0 0 57.9 131.21666666666667" fill="none" stroke="#1b2f3e" stroke-width="1.0"/>
<path d="M30.2 125.0 A7.45 2.2 0 0 1 45.1 125.0 V142.4 A7.45 2.2 0 0 1 30.2 142.4 Z" fill="#fff" stroke="#1b2f3e" stroke-width="0.9"/><path d="M30.2 128.41666666666666 A7.45 2.2 0 0 0 45.1 128.41666666666666" fill="none" stroke="#1b2f3e" stroke-width="1.0"/><path d="M30.2 135.68333333333334 A7.45 2.2 0 0 0 45.1 135.68333333333334" fill="none" stroke="#1b2f3e" stroke-width="1.0"/>
<path d="M46.2 146 L47.6 141.4 L57 131.6 Q58.6 131.2 59.6 132.4 Q60.2 133.6 59.6 134.6 L50.6 144.2 Z" fill="#fff" stroke="#1b2f3e" stroke-width="0.9"/>
<path d="M48.2 142 L50.2 143.8 M55.6 133.4 L58 135.8" stroke="#1b2f3e" stroke-width="0.8" fill="none"/></g>
<g transform="translate(0 0) scale(1)"><rect x="38.5" y="161.3" width="11.6" height="10.2" fill="none" stroke="#fff" stroke-width="2.1"/><path d="M40.4 169.5 L48.2 163.3" stroke="#fff" stroke-width="3.2"/><rect x="31.799999999999997" y="174.5" width="11.799999999999999" height="11.399999999999999" fill="none" stroke="#fff" stroke-width="2.1"/><path d="M33.699999999999996 183.89999999999998 L41.7 176.5" stroke="#fff" stroke-width="3.2"/><rect x="45.1" y="174.5" width="11.799999999999999" height="11.399999999999999" fill="none" stroke="#fff" stroke-width="2.1"/><path d="M47.0 183.89999999999998 L55.00000000000001 176.5" stroke="#fff" stroke-width="3.2"/><path d="M30.9 186.4 H57.8" stroke="#fff" stroke-width="1.2"/></g>
<g transform="translate(0 0) scale(1)"><rect x="30.4" y="249.6" width="27.4" height="20" rx="2.4" fill="none" stroke="#fff" stroke-width="2.5"/>
<path d="M41.2 270.6 H47.4 L47.8 273 H53.6 V275.7 H34.4 V273 H40.8 Z" fill="#fff"/>
<circle cx="44.1" cy="258.8" r="7.3" fill="#fff"/>
<path d="M44.6 258.6 L48 251.6 M44.6 258.6 L52 257.6" stroke="#1b2f3e" stroke-width="1.3" fill="none"/>
<path d="M45.6 257.6 L48.8 251.6 A7.6 7.6 0 0 1 52.2 256.8 Z" fill="#1b2f3e" opacity="0.0"/></g>
<g transform="translate(0 0) scale(1)"><rect x="29.2" y="294" width="29.4" height="24.2" fill="#fff"/><rect x="37.2" y="298.6" width="6.2" height="3" fill="#1b2f3e"/><rect x="44.4" y="298.6" width="6.2" height="3" fill="#1b2f3e"/><rect x="51.6" y="298.6" width="6.2" height="3" fill="#1b2f3e"/><rect x="37.2" y="302.6" width="6.2" height="3" fill="#1b2f3e"/><rect x="44.4" y="302.6" width="6.2" height="3" fill="#1b2f3e"/><rect x="51.6" y="302.6" width="6.2" height="3" fill="#1b2f3e"/><rect x="37.2" y="306.6" width="6.2" height="3" fill="#1b2f3e"/><rect x="44.4" y="306.6" width="6.2" height="3" fill="#1b2f3e"/><rect x="51.6" y="306.6" width="6.2" height="3" fill="#1b2f3e"/><rect x="37.2" y="310.6" width="6.2" height="3" fill="#1b2f3e"/><rect x="44.4" y="310.6" width="6.2" height="3" fill="#1b2f3e"/><rect x="51.6" y="310.6" width="6.2" height="3" fill="#1b2f3e"/><rect x="37.2" y="314.6" width="6.2" height="3" fill="#1b2f3e"/><rect x="44.4" y="314.6" width="6.2" height="3" fill="#1b2f3e"/><rect x="51.6" y="314.6" width="6.2" height="3" fill="#1b2f3e"/><rect x="30" y="300.2" width="4" height="0.8" fill="#1b2f3e" opacity="0.6"/><rect x="30" y="304.2" width="4" height="0.8" fill="#1b2f3e" opacity="0.6"/><rect x="30" y="308.2" width="4" height="0.8" fill="#1b2f3e" opacity="0.6"/><rect x="30" y="312.2" width="4" height="0.8" fill="#1b2f3e" opacity="0.6"/><rect x="30" y="316.2" width="4" height="0.8" fill="#1b2f3e" opacity="0.6"/><path d="M37 294 v2 M44.2 294 v2 M51.4 294 v2" stroke="#1b2f3e" stroke-width="0.8"/><circle cx="51.4" cy="313.2" r="5.4" fill="#1b2f3e" stroke="#fff" stroke-width="1.7"/><circle cx="51.4" cy="313.2" r="7.2" fill="none" stroke="#1b2f3e" stroke-width="1.2"/><path d="M55.4 317.2 L59.4 321.2" stroke="#1b2f3e" stroke-width="4.6" stroke-linecap="round"/><path d="M55.4 317.2 L59.4 321.2" stroke="#fff" stroke-width="2.4" stroke-linecap="round"/></g>
<g transform="translate(0 0) scale(1)"><path d="M29.2 345.6 L44 338.3 L58.8 345.6" fill="none" stroke="#fff" stroke-width="1.3" stroke-linejoin="miter"/>
<path d="M29.4 347.4 L44 340.4 L58.6 347.4 V362.4 H29.4 Z" fill="#fff"/>
<rect x="36.4" y="348" width="15.2" height="14.6" fill="#1b2f3e"/><rect x="37.4" y="348.90" width="13.2" height="1.9" fill="#fff"/><rect x="37.4" y="351.65" width="13.2" height="1.9" fill="#fff"/><rect x="37.4" y="354.40" width="13.2" height="1.9" fill="#fff"/><rect x="37.4" y="357.15" width="13.2" height="1.9" fill="#fff"/><rect x="37.4" y="359.90" width="13.2" height="1.9" fill="#fff"/></g>
<g transform="translate(0 0) scale(1)"><path d="M30.4 383.7 H42.6 L43.9 384.6 L45.2 383.7 H57.4 V401.2 H45.6 L43.9 402.3 L42.2 401.2 H30.4 Z" fill="none" stroke="#fff" stroke-width="1.1"/><path d="M43.9 384.6 V402" stroke="#fff" stroke-width="1.1"/><rect x="32.4" y="386.20" width="9.4" height="1.5" fill="#fff" opacity="0.92"/><rect x="46" y="386.20" width="9.4" height="1.5" fill="#fff" opacity="0.92"/><rect x="32.4" y="388.70" width="9.4" height="1.5" fill="#fff" opacity="0.92"/><rect x="46" y="388.70" width="9.4" height="1.5" fill="#fff" opacity="0.92"/><rect x="32.4" y="391.20" width="9.4" height="1.5" fill="#fff" opacity="0.92"/><rect x="46" y="391.20" width="9.4" height="1.5" fill="#fff" opacity="0.92"/><rect x="32.4" y="393.70" width="9.4" height="1.5" fill="#fff" opacity="0.92"/><rect x="46" y="393.70" width="9.4" height="1.5" fill="#fff" opacity="0.92"/><rect x="32.4" y="396.20" width="9.4" height="1.5" fill="#fff" opacity="0.92"/><rect x="46" y="396.20" width="9.4" height="1.5" fill="#fff" opacity="0.92"/><rect x="32.4" y="398.70" width="9.4" height="1.5" fill="#fff" opacity="0.92"/><rect x="46" y="398.70" width="9.4" height="1.5" fill="#fff" opacity="0.92"/></g>
<g transform="translate(0 0) scale(1)"><path d="M58.2 440 V428.6 Q58.2 426.5 56 426.5 H32.4 Q30.3 426.5 30.3 428.6 V443.6 Q30.3 445.8 32.4 445.8 H44" fill="none" stroke="#fff" stroke-width="2.4"/>
<rect x="39" y="434" width="10.2" height="3.2" fill="#fff"/>
<path d="M38.6 449.4 H47 L49.6 452.6 H34.2 Z" fill="#fff"/>
<circle cx="50.9" cy="445.3" r="5.3" fill="#1b2f3e" stroke="#fff" stroke-width="1.7"/>
<path d="M54.9 449.3 L59.2 453.4" stroke="#fff" stroke-width="2.4" stroke-linecap="round"/></g>
<g transform="translate(0 0) scale(1)"><rect x="32.9" y="469.2" width="19.3" height="23" rx="0.8" fill="#fff"/>
<path d="M32.9 471.8 H52.2 M32.9 489.6 H52.2" stroke="#8d9aa3" stroke-width="0.7"/>
<rect x="43" y="479.8" width="13.2" height="16.6" rx="1.2" fill="#fff" stroke="#1b2f3e" stroke-width="1.3"/>
<path d="M43.8 483 H55.4" stroke="#8d9aa3" stroke-width="0.7"/></g>
<g transform="translate(0 0) scale(1)"><path d="M29.1 522.2 L33.6 518.1 L39 524.2 L48.4 512 L52.8 515.7 L39 531.6 Z" fill="#fff"/>
<path d="M46.2 528.4 L56.2 538.2 M56.2 528.4 L46.2 538.2" stroke="#fff" stroke-width="3"/></g>
<g transform="translate(0 0) scale(1)"><rect x="27.9" y="556.6" width="11.2" height="13.6" fill="#fff"/>
<rect x="48.2" y="570.1" width="11.4" height="13.6" fill="#fff"/>
<path d="M40 566.8 H44 V564 L48.4 568.8 L44 573.6 V570.8 H40 Z" fill="#fff"/></g>
<g transform="translate(0 0) scale(1)"><rect x="29.2" y="603.9" width="29.4" height="19.9" rx="2.2" fill="#fff"/>
<rect x="32" y="606.9" width="10.4" height="13.8" fill="#1b2f3e"/>
<rect x="34" y="609.6" width="6.6" height="5" fill="none" stroke="#fff" stroke-width="1"/>
<rect x="34.2" y="616" width="6" height="1.4" fill="#fff"/>
<path d="M45.7 611.6 H56.4 M45.7 616.6 H56.4" stroke="#1b2f3e" stroke-width="1.4"/></g>
<g transform="translate(0 0) scale(1)"><rect x="32.9" y="644" width="22.3" height="28.8" fill="#fff"/><rect x="36.6" y="648.00" width="1.3" height="1.3" fill="#1b2f3e"/><rect x="39.6" y="648.10" width="9.5" height="1.1" fill="#1b2f3e"/><rect x="36.6" y="651.25" width="1.3" height="1.3" fill="#1b2f3e"/><rect x="39.6" y="651.35" width="9.5" height="1.1" fill="#1b2f3e"/><rect x="36.6" y="654.50" width="1.3" height="1.3" fill="#1b2f3e"/><rect x="39.6" y="654.60" width="12" height="1.1" fill="#1b2f3e"/><rect x="36.6" y="657.75" width="1.3" height="1.3" fill="#1b2f3e"/><rect x="39.6" y="657.85" width="12" height="1.1" fill="#1b2f3e"/><rect x="36.6" y="661.00" width="1.3" height="1.3" fill="#1b2f3e"/><rect x="39.6" y="661.10" width="12" height="1.1" fill="#1b2f3e"/><rect x="36.6" y="664.25" width="1.3" height="1.3" fill="#1b2f3e"/><rect x="39.6" y="664.35" width="12" height="1.1" fill="#1b2f3e"/><rect x="36.6" y="667.50" width="1.3" height="1.3" fill="#1b2f3e"/><rect x="39.6" y="667.60" width="12" height="1.1" fill="#1b2f3e"/><path d="M50.4 645.6 L58 653.6 M58 645.6 L50.4 653.6" stroke="#1b2f3e" stroke-width="4.6"/><path d="M50.8 646 L57.6 653.2 M57.6 646 L50.8 653.2" stroke="#fff" stroke-width="2.4"/></g>
<g transform="translate(0 0) scale(1)"><path d="M29.4 688.4 L50.6 713.7 H29.4 Z M34.2 699.4 V709.7 H43.4 Z" fill="#fff" fill-rule="evenodd"/>
<path d="M31.2 713.6 v-1.6 M33.2 713.6 v-1.6 M35.2 713.6 v-1.6 M37.2 713.6 v-1.6 M39.2 713.6 v-1.6 M41.2 713.6 v-1.6 M43.2 713.6 v-1.6" stroke="#1b2f3e" stroke-width="0.7"/>
<path d="M45.6 704 L59.2 717.8 M59.2 704 L45.6 717.8" stroke="#1b2f3e" stroke-width="5.6"/>
<path d="M46.6 705 L58.4 716.8 M58.4 705 L46.6 716.8" stroke="#fff" stroke-width="3.4"/></g>
<g transform="translate(0 0) scale(1)"><ellipse cx="43.9" cy="740.8" rx="7.5" ry="9.6" fill="#fff"/>
<path d="M29.2 760.2 C29.4 754.6 31 753.4 38.2 750.6 L42 759 L43.9 752 L45.8 759 L48 751 L52 753 V760.2 Z" fill="#fff"/>
<path d="M43.9 752.6 L42.8 758.4 L43.9 760.2 L45 758.4 Z" fill="#fff"/>
<circle cx="52.5" cy="754.5" r="6.9" fill="#1b2f3e"/>
<circle cx="52.5" cy="754.5" r="5.6" fill="#1b2f3e" stroke="#fff" stroke-width="1.3"/>
<path d="M52.5 750.6 V754.7 H56" fill="none" stroke="#fff" stroke-width="1.2"/></g>
<g transform="translate(0 0) scale(1)"><rect x="40.3" y="775.4" width="7.9" height="7" fill="#fff"/>
<rect x="40.3" y="784.8" width="7.9" height="6.8" fill="#fff"/>
<rect x="30.2" y="797.6" width="7.4" height="6.9" fill="#fff"/>
<rect x="40.3" y="797.6" width="6.4" height="6.9" fill="#fff"/>
<path d="M44.2 782 V797 M33.8 798 V794.6 H46" fill="none" stroke="#fff" stroke-width="1.4"/>
<circle cx="50.9" cy="797.6" r="5.3" fill="#1b2f3e" stroke="#fff" stroke-width="1.6"/>
<circle cx="50.9" cy="797.6" r="7" fill="none" stroke="#1b2f3e" stroke-width="1.2"/>
<path d="M54.8 801.6 L59 805.4" stroke="#fff" stroke-width="2.3" stroke-linecap="round"/></g>
<g transform="translate(0 0) scale(1)"><path d="M44 820.6 L55.6 827.4 V841.4 L44 848.2 L32.4 841.4 V827.4 Z M32.6 827.6 L44 834.2 L55.4 827.6 M44 834.2 V848" fill="none" stroke="#fff" stroke-width="2.3" stroke-linejoin="round"/>
<circle cx="52.9" cy="842.6" r="7.4" fill="#fff" stroke="#1b2f3e" stroke-width="1.4"/>
<path d="M48.8 841.2 H52.6 V838.6 L57.4 842.6 L52.6 846.6 V844 H48.8 Z" fill="#1b2f3e"/></g>
<g transform="translate(0 0) scale(1)"><rect x="32.8" y="864.8" width="22.5" height="26.2" rx="0.8" fill="#fff"/>
<path d="M32.8 867.6 H55.3 M32.8 887.8 H55.3" stroke="#9aa7af" stroke-width="0.8"/>
<path d="M40.4 864.6 H44.6 L46 870.4 L43 873.6 L45.4 881.4 L40.2 874.4 L42.6 871.4 Z" fill="#1b2f3e"/></g>
<g transform="translate(0 0) scale(1)"><ellipse cx="43.9" cy="917.8" rx="6.4" ry="8" fill="#fff"/>
<path d="M31.2 934.8 C31.2 929 33 927.6 39.6 925.2 Q43.9 928.4 48.2 925.2 C52 926.4 54.6 927.8 56.2 934.8 Z" fill="#fff"/>
<path d="M45.4 938.4 L46.6 933.8 L56.8 923.8 Q58.4 923.2 59.6 924.4 Q60.4 925.8 59.6 926.8 L49.8 936.8 Z" fill="#fff" stroke="#1b2f3e" stroke-width="1"/>
<path d="M47.4 934.4 L49.4 936.4 M55.6 925.6 L58 928" stroke="#1b2f3e" stroke-width="0.8"/></g>
<text x="40.6" y="922" font-family="Liberation Sans, sans-serif" font-weight="700" font-size="11" fill="#1b2f3e">?</text>
<path d="M77.3 71.35 L81 67.65 L84.7 71.35" fill="none" stroke="#555555" stroke-width="1.7"/>
<path d="M77.3 941.15 L81 944.85 L84.7 941.15" fill="none" stroke="#555555" stroke-width="1.7"/>
<path d="M437.1 252.35 L440.8 248.65 L444.5 252.35" fill="none" stroke="#555555" stroke-width="1.7"/>
<path d="M437.1 862.65 L440.8 866.35 L444.5 862.65" fill="none" stroke="#555555" stroke-width="1.7"/>
<path d="M123.35 877.8 L119.65 881.5 L123.35 885.2" fill="none" stroke="#555555" stroke-width="1.7"/>
<path d="M421.65 877.8 L425.35 881.5 L421.65 885.2" fill="none" stroke="#555555" stroke-width="1.7"/>
<path d="M123.35 933.3 L119.65 937 L123.35 940.7" fill="none" stroke="#555555" stroke-width="1.7"/>
<path d="M438.65 933.3 L442.35 937 L438.65 940.7" fill="none" stroke="#555555" stroke-width="1.7"/>
<path d="M1529.8 258.35 L1533.5 254.65 L1537.2 258.35" fill="none" stroke="#555555" stroke-width="1.7"/>
<path d="M1529.8 922.65 L1533.5 926.35 L1537.2 922.65" fill="none" stroke="#555555" stroke-width="1.7"/>
<path d="M1415.3 144.4 L1418.5 147.6 L1421.7 144.4" fill="none" stroke="#444" stroke-width="1.3"/>
<path d="M429.9 908.7 L433.5 912.3 L437.1 908.7" fill="none" stroke="#444" stroke-width="1.4"/>
<g transform="translate(0 0) scale(1)"><path d="M374.5 93.4 L375.5 87.3 H380.70000000000005 L381.70000000000005 93.4 Z" fill="#000"/><circle cx="372.3" cy="92" r="4.6" fill="#000"/><circle cx="372.3" cy="92" r="3.3" fill="none" stroke="#c0cdd6" stroke-width="0.55"/><circle cx="373.40000000000003" cy="90.7" r="0.95" fill="#c0cdd6"/><circle cx="383.90000000000003" cy="92" r="4.6" fill="#000"/><circle cx="383.90000000000003" cy="92" r="3.3" fill="none" stroke="#c0cdd6" stroke-width="0.55"/><circle cx="385.00000000000006" cy="90.7" r="0.95" fill="#c0cdd6"/><rect x="377.1" y="90.6" width="2" height="2.6" fill="#444"/></g>
<g transform="translate(0 0) scale(1)"><path d="M1138.5 147.6 L1139.5 141.5 H1144.6999999999998 L1145.6999999999998 147.6 Z" fill="#000"/><circle cx="1136.3" cy="146.2" r="4.6" fill="#000"/><circle cx="1136.3" cy="146.2" r="3.3" fill="none" stroke="#c0cdd6" stroke-width="0.55"/><circle cx="1137.3999999999999" cy="144.89999999999998" r="0.95" fill="#c0cdd6"/><circle cx="1147.8999999999999" cy="146.2" r="4.6" fill="#000"/><circle cx="1147.8999999999999" cy="146.2" r="3.3" fill="none" stroke="#c0cdd6" stroke-width="0.55"/><circle cx="1148.9999999999998" cy="144.89999999999998" r="0.95" fill="#c0cdd6"/><rect x="1141.1" y="144.79999999999998" width="2" height="2.6" fill="#444"/></g>
<g transform="translate(0 0) scale(1)"><circle cx="1173.1" cy="152" r="3.1"/><circle cx="1180" cy="152" r="3.1"/><circle cx="1187" cy="152" r="3.1"/></g>
<g transform="translate(0 0) scale(1)"><path d="M1491.4 95.4 H1484.8 Q1483.2 95.4 1483.2 93.8 V85.6 Q1483.2 84 1484.8 84 H1497.4 Q1499 84 1499 85.6 V91.4" fill="none" stroke="#000" stroke-width="2.2"/>
<path d="M1489 95.4 H1492 V99.3 H1485 L1489 97.6 Z" fill="#000"/>
<circle cx="1496.4" cy="96.4" r="3.6" fill="#fff" stroke="#000" stroke-width="2"/>
<path d="M1492.4 96.4 L1496.2 93.8 L1499.2 96.4 L1496.2 99 Z" fill="#fff"/></g>
<g transform="translate(0 0) scale(1)"><circle cx="1523" cy="87.3" r="3.9" fill="#98a2a9"/>
<circle cx="1528.7" cy="89.8" r="4.4" fill="#4b5358"/>
<circle cx="1532.5" cy="96.4" r="3.4" fill="none" stroke="#000" stroke-width="2.4"/>
<path d="M1523.2 87 Q1530.6 87.4 1532.2 93.6" fill="none" stroke="#c0cdd6" stroke-width="1.7"/>
<path d="M1529 93.6 L1535.6 92.4 L1533.2 98.4 Z" fill="#c0cdd6"/></g>
<g transform="translate(0 0) scale(1)"><path d="M1022.6 169.4 L1030.2 173.5 V178 M1026 184.9 L1022.6 186.6 L1015.1 182.4 V173.5 L1022.6 169.4 M1015.3 173.6 L1022.6 177.6 L1030 173.6 M1022.6 177.6 V186.4" fill="none" stroke="#000" stroke-width="1.5" stroke-linejoin="round"/>
<circle cx="1028.2" cy="183.4" r="5" fill="#c0cdd6"/><path d="M1027.22 180.04 L1027.75 178.62 L1028.65 178.62 L1029.18 180.04 L1029.39 180.11 L1030.64 179.27 L1031.37 179.80 L1030.97 181.25 L1031.09 181.43 L1032.61 181.49 L1032.88 182.35 L1031.70 183.29 L1031.70 183.51 L1032.88 184.45 L1032.61 185.31 L1031.09 185.37 L1030.97 185.55 L1031.37 187.00 L1030.64 187.53 L1029.39 186.69 L1029.18 186.76 L1028.65 188.18 L1027.75 188.18 L1027.22 186.76 L1027.01 186.69 L1025.76 187.53 L1025.03 187.00 L1025.43 185.55 L1025.31 185.37 L1023.79 185.31 L1023.52 184.45 L1024.70 183.51 L1024.70 183.29 L1023.52 182.35 L1023.79 181.49 L1025.31 181.43 L1025.43 181.25 L1025.03 179.80 L1025.76 179.27 L1027.01 180.11 Z M1026.30 183.40 a1.9 1.9 0 1 0 3.8 0 a1.9 1.9 0 1 0 -3.8 0 Z" fill="#000" fill-rule="evenodd"/></g>
<g transform="translate(0 0) scale(1)"><path d="M1056 172 V170.3 A4.6 1.5 0 0 1 1065.2 170.3 V172 Z" fill="#000"/><path d="M1061 172.9 A4.4 1.5 0 0 1 1069.8 172.9 V183.1 A4.4 1.5 0 0 1 1061 183.1 Z" fill="#000" stroke="#c0cdd6" stroke-width="0.9"/><path d="M1061 174.675 A4.4 1.5 0 0 0 1069.8 174.675" fill="none" stroke="#c0cdd6" stroke-width="0.75"/><path d="M1061 179.07500000000002 A4.4 1.5 0 0 0 1069.8 179.07500000000002" fill="none" stroke="#c0cdd6" stroke-width="0.75"/><path d="M1052.6 175.0 A4.4 1.5 0 0 1 1061.3999999999999 175.0 V185.6 A4.4 1.5 0 0 1 1052.6 185.6 Z" fill="#000" stroke="#c0cdd6" stroke-width="0.9"/><path d="M1052.6 176.90833333333333 A4.4 1.5 0 0 0 1061.3999999999999 176.90833333333333" fill="none" stroke="#c0cdd6" stroke-width="0.75"/><path d="M1052.6 181.44166666666666 A4.4 1.5 0 0 0 1061.3999999999999 181.44166666666666" fill="none" stroke="#c0cdd6" stroke-width="0.75"/></g>
<g transform="translate(0 0) scale(1)"><rect x="1092.8" y="171.5" width="12.6" height="14.3" rx="0.8" fill="none" stroke="#000" stroke-width="1.9"/>
<path d="M1095.6 172 V170.6 H1097.4 Q1097.4 168 1099.1 168 Q1100.8 168 1100.8 170.6 H1102.6 V172 Z" fill="#000"/>
<circle cx="1099.1" cy="169.8" r="0.7" fill="#c0cdd6"/>
<path d="M1095 178.2 H1099.2 V175.9 L1103 179.1 L1099.2 182.3 V180 H1095 Z" fill="#000"/></g>
<g transform="translate(0 0) scale(1)"><ellipse cx="1135.8" cy="173.7" rx="3.9" ry="4.8" fill="#000"/>
<path d="M1128 184.2 C1128 180.6 1129.4 180 1133 178.6 Q1135.8 180.6 1138.6 178.6 L1140 179.4 V184.2 Z" fill="#000"/>
<rect x="1135.6" y="179.8" width="11" height="7.4" rx="0.8" fill="#000" stroke="#c0cdd6" stroke-width="0.8"/>
<path d="M1139.2 180 V178.6 H1143 V180" fill="none" stroke="#000" stroke-width="1"/></g>
<g transform="translate(0 0) scale(1)"><path d="M1170.3 176.7 L1173.1 174 L1177.2 178.1 L1184 169.9 L1186.8 172.3 L1177.2 183.6 Z" fill="#000"/>
<circle cx="1184.9" cy="183.2" r="5.1" fill="#c0cdd6"/><path d="M1183.92 179.84 L1184.45 178.42 L1185.35 178.42 L1185.88 179.84 L1186.09 179.91 L1187.34 179.07 L1188.07 179.60 L1187.67 181.05 L1187.79 181.23 L1189.31 181.29 L1189.58 182.15 L1188.40 183.09 L1188.40 183.31 L1189.58 184.25 L1189.31 185.11 L1187.79 185.17 L1187.67 185.35 L1188.07 186.80 L1187.34 187.33 L1186.09 186.49 L1185.88 186.56 L1185.35 187.98 L1184.45 187.98 L1183.92 186.56 L1183.71 186.49 L1182.46 187.33 L1181.73 186.80 L1182.13 185.35 L1182.01 185.17 L1180.49 185.11 L1180.22 184.25 L1181.40 183.31 L1181.40 183.09 L1180.22 182.15 L1180.49 181.29 L1182.01 181.23 L1182.13 181.05 L1181.73 179.60 L1182.46 179.07 L1183.71 179.91 Z M1183.00 183.20 a1.9 1.9 0 1 0 3.8 0 a1.9 1.9 0 1 0 -3.8 0 Z" fill="#000" fill-rule="evenodd"/></g>
<g transform="translate(0 0) scale(1)"><rect x="689.3" y="218" width="14.1" height="17.9" fill="#000"/>
<path d="M695 233.6 L696.4 229.2 L704 221.6 L706.6 224.2 L699 231.8 Z" fill="#000" stroke="#fff" stroke-width="0.9" stroke-linejoin="round"/>
<path d="M696.6 229.4 L698.8 231.6" stroke="#fff" stroke-width="0.7"/></g>
<g transform="translate(0 0) scale(1)"><rect x="730.5" y="220.3" width="15.2" height="10.2" rx="2.7" fill="none" stroke="#1a1a1a" stroke-width="1.2"/><path d="M731 225.4 H745.2 M735.6 220.6 V230.2 M740.6 220.6 V230.2" stroke="#666" stroke-width="0.6"/><rect x="731.80" y="221.6" width="3.5" height="3.2" rx="1.3" fill="#000"/><rect x="736.35" y="221.6" width="3.5" height="3.2" rx="1.3" fill="#000"/><rect x="740.90" y="221.6" width="3.5" height="3.2" rx="1.3" fill="#000"/><rect x="731.80" y="225.6" width="3.5" height="3.2" rx="1.3" fill="#000"/><rect x="736.35" y="225.6" width="3.5" height="3.2" rx="1.3" fill="#000"/><rect x="740.90" y="225.6" width="3.5" height="3.2" rx="1.3" fill="#000"/><path d="M731.6 232.2 L729.2 234.8 M734.8 232.4 L733.6 235.8 M738.1 232.4 V236 M741.4 232.4 L742.6 235.8 M744.6 232.2 L747 234.8" stroke="#333" stroke-width="1.1"/></g>
<g transform="translate(0 0) scale(1)"><path d="M389.80 273.43 L390.69 271.33 L392.11 271.33 L393.00 273.43 L393.26 273.52 L395.22 272.34 L396.36 273.17 L395.85 275.40 L396.01 275.62 L398.28 275.82 L398.72 277.16 L397.00 278.66 L397.00 278.94 L398.72 280.44 L398.28 281.78 L396.01 281.98 L395.85 282.20 L396.36 284.43 L395.22 285.26 L393.26 284.08 L393.00 284.17 L392.11 286.27 L390.69 286.27 L389.80 284.17 L389.54 284.08 L387.58 285.26 L386.44 284.43 L386.95 282.20 L386.79 281.98 L384.52 281.78 L384.08 280.44 L385.80 278.94 L385.80 278.66 L384.08 277.16 L384.52 275.82 L386.79 275.62 L386.95 275.40 L386.44 273.17 L387.58 272.34 L389.54 273.52 Z M388.90 278.80 a2.5 2.5 0 1 0 5.0 0 a2.5 2.5 0 1 0 -5.0 0 Z" fill="#000" fill-rule="evenodd"/><path d="M401.60 274.65 L402.15 273.22 L403.05 273.22 L403.60 274.65 L403.76 274.70 L405.04 273.87 L405.77 274.40 L405.38 275.87 L405.48 276.01 L407.01 276.09 L407.28 276.95 L406.10 277.91 L406.10 278.09 L407.28 279.05 L407.01 279.91 L405.48 279.99 L405.38 280.13 L405.77 281.60 L405.04 282.13 L403.76 281.30 L403.60 281.35 L403.05 282.78 L402.15 282.78 L401.60 281.35 L401.44 281.30 L400.16 282.13 L399.43 281.60 L399.82 280.13 L399.72 279.99 L398.19 279.91 L397.92 279.05 L399.10 278.09 L399.10 277.91 L397.92 276.95 L398.19 276.09 L399.72 276.01 L399.82 275.87 L399.43 274.40 L400.16 273.87 L401.44 274.70 Z M400.90 278.00 a1.7 1.7 0 1 0 3.4 0 a1.7 1.7 0 1 0 -3.4 0 Z" fill="#000" fill-rule="evenodd"/><path d="M398.60 283.37 L399.26 281.73 L400.34 281.73 L401.00 283.37 L401.20 283.44 L402.70 282.49 L403.57 283.12 L403.13 284.85 L403.26 285.02 L405.03 285.14 L405.36 286.16 L404.00 287.29 L404.00 287.51 L405.36 288.64 L405.03 289.66 L403.26 289.78 L403.13 289.95 L403.57 291.68 L402.70 292.31 L401.20 291.36 L401.00 291.43 L400.34 293.07 L399.26 293.07 L398.60 291.43 L398.40 291.36 L396.90 292.31 L396.03 291.68 L396.47 289.95 L396.34 289.78 L394.57 289.66 L394.24 288.64 L395.60 287.51 L395.60 287.29 L394.24 286.16 L394.57 285.14 L396.34 285.02 L396.47 284.85 L396.03 283.12 L396.90 282.49 L398.40 283.44 Z M397.70 287.40 a2.1 2.1 0 1 0 4.2 0 a2.1 2.1 0 1 0 -4.2 0 Z" fill="#000" fill-rule="evenodd"/></g>
<g transform="translate(0 0) scale(1)"><path d="M389.80 377.43 L390.69 375.33 L392.11 375.33 L393.00 377.43 L393.26 377.52 L395.22 376.34 L396.36 377.17 L395.85 379.40 L396.01 379.62 L398.28 379.82 L398.72 381.16 L397.00 382.66 L397.00 382.94 L398.72 384.44 L398.28 385.78 L396.01 385.98 L395.85 386.20 L396.36 388.43 L395.22 389.26 L393.26 388.08 L393.00 388.17 L392.11 390.27 L390.69 390.27 L389.80 388.17 L389.54 388.08 L387.58 389.26 L386.44 388.43 L386.95 386.20 L386.79 385.98 L384.52 385.78 L384.08 384.44 L385.80 382.94 L385.80 382.66 L384.08 381.16 L384.52 379.82 L386.79 379.62 L386.95 379.40 L386.44 377.17 L387.58 376.34 L389.54 377.52 Z M388.90 382.80 a2.5 2.5 0 1 0 5.0 0 a2.5 2.5 0 1 0 -5.0 0 Z" fill="#000" fill-rule="evenodd"/><path d="M401.60 378.65 L402.15 377.22 L403.05 377.22 L403.60 378.65 L403.76 378.70 L405.04 377.87 L405.77 378.40 L405.38 379.87 L405.48 380.01 L407.01 380.09 L407.28 380.95 L406.10 381.91 L406.10 382.09 L407.28 383.05 L407.01 383.91 L405.48 383.99 L405.38 384.13 L405.77 385.60 L405.04 386.13 L403.76 385.30 L403.60 385.35 L403.05 386.78 L402.15 386.78 L401.60 385.35 L401.44 385.30 L400.16 386.13 L399.43 385.60 L399.82 384.13 L399.72 383.99 L398.19 383.91 L397.92 383.05 L399.10 382.09 L399.10 381.91 L397.92 380.95 L398.19 380.09 L399.72 380.01 L399.82 379.87 L399.43 378.40 L400.16 377.87 L401.44 378.70 Z M400.90 382.00 a1.7 1.7 0 1 0 3.4 0 a1.7 1.7 0 1 0 -3.4 0 Z" fill="#000" fill-rule="evenodd"/><path d="M398.60 387.37 L399.26 385.73 L400.34 385.73 L401.00 387.37 L401.20 387.44 L402.70 386.49 L403.57 387.12 L403.13 388.85 L403.26 389.02 L405.03 389.14 L405.36 390.16 L404.00 391.29 L404.00 391.51 L405.36 392.64 L405.03 393.66 L403.26 393.78 L403.13 393.95 L403.57 395.68 L402.70 396.31 L401.20 395.36 L401.00 395.43 L400.34 397.07 L399.26 397.07 L398.60 395.43 L398.40 395.36 L396.90 396.31 L396.03 395.68 L396.47 393.95 L396.34 393.78 L394.57 393.66 L394.24 392.64 L395.60 391.51 L395.60 391.29 L394.24 390.16 L394.57 389.14 L396.34 389.02 L396.47 388.85 L396.03 387.12 L396.90 386.49 L398.40 387.44 Z M397.70 391.40 a2.1 2.1 0 1 0 4.2 0 a2.1 2.1 0 1 0 -4.2 0 Z" fill="#000" fill-rule="evenodd"/></g>
<g transform="translate(0 0) scale(1)"><path d="M389.80 480.43 L390.69 478.33 L392.11 478.33 L393.00 480.43 L393.26 480.52 L395.22 479.34 L396.36 480.17 L395.85 482.40 L396.01 482.62 L398.28 482.82 L398.72 484.16 L397.00 485.66 L397.00 485.94 L398.72 487.44 L398.28 488.78 L396.01 488.98 L395.85 489.20 L396.36 491.43 L395.22 492.26 L393.26 491.08 L393.00 491.17 L392.11 493.27 L390.69 493.27 L389.80 491.17 L389.54 491.08 L387.58 492.26 L386.44 491.43 L386.95 489.20 L386.79 488.98 L384.52 488.78 L384.08 487.44 L385.80 485.94 L385.80 485.66 L384.08 484.16 L384.52 482.82 L386.79 482.62 L386.95 482.40 L386.44 480.17 L387.58 479.34 L389.54 480.52 Z M388.90 485.80 a2.5 2.5 0 1 0 5.0 0 a2.5 2.5 0 1 0 -5.0 0 Z" fill="#000" fill-rule="evenodd"/><path d="M401.60 481.65 L402.15 480.22 L403.05 480.22 L403.60 481.65 L403.76 481.70 L405.04 480.87 L405.77 481.40 L405.38 482.87 L405.48 483.01 L407.01 483.09 L407.28 483.95 L406.10 484.91 L406.10 485.09 L407.28 486.05 L407.01 486.91 L405.48 486.99 L405.38 487.13 L405.77 488.60 L405.04 489.13 L403.76 488.30 L403.60 488.35 L403.05 489.78 L402.15 489.78 L401.60 488.35 L401.44 488.30 L400.16 489.13 L399.43 488.60 L399.82 487.13 L399.72 486.99 L398.19 486.91 L397.92 486.05 L399.10 485.09 L399.10 484.91 L397.92 483.95 L398.19 483.09 L399.72 483.01 L399.82 482.87 L399.43 481.40 L400.16 480.87 L401.44 481.70 Z M400.90 485.00 a1.7 1.7 0 1 0 3.4 0 a1.7 1.7 0 1 0 -3.4 0 Z" fill="#000" fill-rule="evenodd"/><path d="M398.60 490.37 L399.26 488.73 L400.34 488.73 L401.00 490.37 L401.20 490.44 L402.70 489.49 L403.57 490.12 L403.13 491.85 L403.26 492.02 L405.03 492.14 L405.36 493.16 L404.00 494.29 L404.00 494.51 L405.36 495.64 L405.03 496.66 L403.26 496.78 L403.13 496.95 L403.57 498.68 L402.70 499.31 L401.20 498.36 L401.00 498.43 L400.34 500.07 L399.26 500.07 L398.60 498.43 L398.40 498.36 L396.90 499.31 L396.03 498.68 L396.47 496.95 L396.34 496.78 L394.57 496.66 L394.24 495.64 L395.60 494.51 L395.60 494.29 L394.24 493.16 L394.57 492.14 L396.34 492.02 L396.47 491.85 L396.03 490.12 L396.90 489.49 L398.40 490.44 Z M397.70 494.40 a2.1 2.1 0 1 0 4.2 0 a2.1 2.1 0 1 0 -4.2 0 Z" fill="#000" fill-rule="evenodd"/></g>
<g transform="translate(0 0) scale(1)"><path d="M389.80 584.43 L390.69 582.33 L392.11 582.33 L393.00 584.43 L393.26 584.52 L395.22 583.34 L396.36 584.17 L395.85 586.40 L396.01 586.62 L398.28 586.82 L398.72 588.16 L397.00 589.66 L397.00 589.94 L398.72 591.44 L398.28 592.78 L396.01 592.98 L395.85 593.20 L396.36 595.43 L395.22 596.26 L393.26 595.08 L393.00 595.17 L392.11 597.27 L390.69 597.27 L389.80 595.17 L389.54 595.08 L387.58 596.26 L386.44 595.43 L386.95 593.20 L386.79 592.98 L384.52 592.78 L384.08 591.44 L385.80 589.94 L385.80 589.66 L384.08 588.16 L384.52 586.82 L386.79 586.62 L386.95 586.40 L386.44 584.17 L387.58 583.34 L389.54 584.52 Z M388.90 589.80 a2.5 2.5 0 1 0 5.0 0 a2.5 2.5 0 1 0 -5.0 0 Z" fill="#000" fill-rule="evenodd"/><path d="M401.60 585.65 L402.15 584.22 L403.05 584.22 L403.60 585.65 L403.76 585.70 L405.04 584.87 L405.77 585.40 L405.38 586.87 L405.48 587.01 L407.01 587.09 L407.28 587.95 L406.10 588.91 L406.10 589.09 L407.28 590.05 L407.01 590.91 L405.48 590.99 L405.38 591.13 L405.77 592.60 L405.04 593.13 L403.76 592.30 L403.60 592.35 L403.05 593.78 L402.15 593.78 L401.60 592.35 L401.44 592.30 L400.16 593.13 L399.43 592.60 L399.82 591.13 L399.72 590.99 L398.19 590.91 L397.92 590.05 L399.10 589.09 L399.10 588.91 L397.92 587.95 L398.19 587.09 L399.72 587.01 L399.82 586.87 L399.43 585.40 L400.16 584.87 L401.44 585.70 Z M400.90 589.00 a1.7 1.7 0 1 0 3.4 0 a1.7 1.7 0 1 0 -3.4 0 Z" fill="#000" fill-rule="evenodd"/><path d="M398.60 594.37 L399.26 592.73 L400.34 592.73 L401.00 594.37 L401.20 594.44 L402.70 593.49 L403.57 594.12 L403.13 595.85 L403.26 596.02 L405.03 596.14 L405.36 597.16 L404.00 598.29 L404.00 598.51 L405.36 599.64 L405.03 600.66 L403.26 600.78 L403.13 600.95 L403.57 602.68 L402.70 603.31 L401.20 602.36 L401.00 602.43 L400.34 604.07 L399.26 604.07 L398.60 602.43 L398.40 602.36 L396.90 603.31 L396.03 602.68 L396.47 600.95 L396.34 600.78 L394.57 600.66 L394.24 599.64 L395.60 598.51 L395.60 598.29 L394.24 597.16 L394.57 596.14 L396.34 596.02 L396.47 595.85 L396.03 594.12 L396.90 593.49 L398.40 594.44 Z M397.70 598.40 a2.1 2.1 0 1 0 4.2 0 a2.1 2.1 0 1 0 -4.2 0 Z" fill="#000" fill-rule="evenodd"/></g>
<g transform="translate(0 0) scale(1)"><path d="M389.80 688.43 L390.69 686.33 L392.11 686.33 L393.00 688.43 L393.26 688.52 L395.22 687.34 L396.36 688.17 L395.85 690.40 L396.01 690.62 L398.28 690.82 L398.72 692.16 L397.00 693.66 L397.00 693.94 L398.72 695.44 L398.28 696.78 L396.01 696.98 L395.85 697.20 L396.36 699.43 L395.22 700.26 L393.26 699.08 L393.00 699.17 L392.11 701.27 L390.69 701.27 L389.80 699.17 L389.54 699.08 L387.58 700.26 L386.44 699.43 L386.95 697.20 L386.79 696.98 L384.52 696.78 L384.08 695.44 L385.80 693.94 L385.80 693.66 L384.08 692.16 L384.52 690.82 L386.79 690.62 L386.95 690.40 L386.44 688.17 L387.58 687.34 L389.54 688.52 Z M388.90 693.80 a2.5 2.5 0 1 0 5.0 0 a2.5 2.5 0 1 0 -5.0 0 Z" fill="#000" fill-rule="evenodd"/><path d="M401.60 689.65 L402.15 688.22 L403.05 688.22 L403.60 689.65 L403.76 689.70 L405.04 688.87 L405.77 689.40 L405.38 690.87 L405.48 691.01 L407.01 691.09 L407.28 691.95 L406.10 692.91 L406.10 693.09 L407.28 694.05 L407.01 694.91 L405.48 694.99 L405.38 695.13 L405.77 696.60 L405.04 697.13 L403.76 696.30 L403.60 696.35 L403.05 697.78 L402.15 697.78 L401.60 696.35 L401.44 696.30 L400.16 697.13 L399.43 696.60 L399.82 695.13 L399.72 694.99 L398.19 694.91 L397.92 694.05 L399.10 693.09 L399.10 692.91 L397.92 691.95 L398.19 691.09 L399.72 691.01 L399.82 690.87 L399.43 689.40 L400.16 688.87 L401.44 689.70 Z M400.90 693.00 a1.7 1.7 0 1 0 3.4 0 a1.7 1.7 0 1 0 -3.4 0 Z" fill="#000" fill-rule="evenodd"/><path d="M398.60 698.37 L399.26 696.73 L400.34 696.73 L401.00 698.37 L401.20 698.44 L402.70 697.49 L403.57 698.12 L403.13 699.85 L403.26 700.02 L405.03 700.14 L405.36 701.16 L404.00 702.29 L404.00 702.51 L405.36 703.64 L405.03 704.66 L403.26 704.78 L403.13 704.95 L403.57 706.68 L402.70 707.31 L401.20 706.36 L401.00 706.43 L400.34 708.07 L399.26 708.07 L398.60 706.43 L398.40 706.36 L396.90 707.31 L396.03 706.68 L396.47 704.95 L396.34 704.78 L394.57 704.66 L394.24 703.64 L395.60 702.51 L395.60 702.29 L394.24 701.16 L394.57 700.14 L396.34 700.02 L396.47 699.85 L396.03 698.12 L396.90 697.49 L398.40 698.44 Z M397.70 702.40 a2.1 2.1 0 1 0 4.2 0 a2.1 2.1 0 1 0 -4.2 0 Z" fill="#000" fill-rule="evenodd"/></g>
<g transform="translate(0 0) scale(1)"><path d="M389.80 792.43 L390.69 790.33 L392.11 790.33 L393.00 792.43 L393.26 792.52 L395.22 791.34 L396.36 792.17 L395.85 794.40 L396.01 794.62 L398.28 794.82 L398.72 796.16 L397.00 797.66 L397.00 797.94 L398.72 799.44 L398.28 800.78 L396.01 800.98 L395.85 801.20 L396.36 803.43 L395.22 804.26 L393.26 803.08 L393.00 803.17 L392.11 805.27 L390.69 805.27 L389.80 803.17 L389.54 803.08 L387.58 804.26 L386.44 803.43 L386.95 801.20 L386.79 800.98 L384.52 800.78 L384.08 799.44 L385.80 797.94 L385.80 797.66 L384.08 796.16 L384.52 794.82 L386.79 794.62 L386.95 794.40 L386.44 792.17 L387.58 791.34 L389.54 792.52 Z M388.90 797.80 a2.5 2.5 0 1 0 5.0 0 a2.5 2.5 0 1 0 -5.0 0 Z" fill="#000" fill-rule="evenodd"/><path d="M401.60 793.65 L402.15 792.22 L403.05 792.22 L403.60 793.65 L403.76 793.70 L405.04 792.87 L405.77 793.40 L405.38 794.87 L405.48 795.01 L407.01 795.09 L407.28 795.95 L406.10 796.91 L406.10 797.09 L407.28 798.05 L407.01 798.91 L405.48 798.99 L405.38 799.13 L405.77 800.60 L405.04 801.13 L403.76 800.30 L403.60 800.35 L403.05 801.78 L402.15 801.78 L401.60 800.35 L401.44 800.30 L400.16 801.13 L399.43 800.60 L399.82 799.13 L399.72 798.99 L398.19 798.91 L397.92 798.05 L399.10 797.09 L399.10 796.91 L397.92 795.95 L398.19 795.09 L399.72 795.01 L399.82 794.87 L399.43 793.40 L400.16 792.87 L401.44 793.70 Z M400.90 797.00 a1.7 1.7 0 1 0 3.4 0 a1.7 1.7 0 1 0 -3.4 0 Z" fill="#000" fill-rule="evenodd"/><path d="M398.60 802.37 L399.26 800.73 L400.34 800.73 L401.00 802.37 L401.20 802.44 L402.70 801.49 L403.57 802.12 L403.13 803.85 L403.26 804.02 L405.03 804.14 L405.36 805.16 L404.00 806.29 L404.00 806.51 L405.36 807.64 L405.03 808.66 L403.26 808.78 L403.13 808.95 L403.57 810.68 L402.70 811.31 L401.20 810.36 L401.00 810.43 L400.34 812.07 L399.26 812.07 L398.60 810.43 L398.40 810.36 L396.90 811.31 L396.03 810.68 L396.47 808.95 L396.34 808.78 L394.57 808.66 L394.24 807.64 L395.60 806.51 L395.60 806.29 L394.24 805.16 L394.57 804.14 L396.34 804.02 L396.47 803.85 L396.03 802.12 L396.90 801.49 L398.40 802.44 Z M397.70 806.40 a2.1 2.1 0 1 0 4.2 0 a2.1 2.1 0 1 0 -4.2 0 Z" fill="#000" fill-rule="evenodd"/></g>
<g transform="translate(0 0) scale(1)"><rect x="130.5" y="904.7" width="12.6" height="12.4" rx="1.2" fill="#c9c9c9"/><rect x="132.1" y="906.5" width="1.5" height="8.8" fill="#fff"/><path d="M137.70 906.5 L133.70 910.9 L137.70 915.3 Z M141.50 906.5 L137.50 910.9 L141.50 915.3 Z " fill="#fff"/></g>
<g transform="translate(0 0) scale(1)"><rect x="160.7" y="904.7" width="12.6" height="12.4" rx="1.2" fill="#c9c9c9"/><rect x="163.5" y="906.5" width="1.9" height="8.8" fill="#fff"/><path d="M170.50 906.5 L165.50 910.9 L170.50 915.3 Z " fill="#fff"/></g>
<g transform="translate(0 0) scale(1)"><rect x="250" y="904.7" width="12.6" height="12.4" rx="1.2" fill="#000"/><rect x="257.9" y="906.5" width="1.9" height="8.8" fill="#fff"/><path d="M252.80 906.5 L257.80 910.9 L252.80 915.3 Z " fill="#fff"/></g>
<g transform="translate(0 0) scale(1)"><rect x="280.1" y="904.7" width="12.6" height="12.4" rx="1.2" fill="#000"/><rect x="289.6" y="906.5" width="1.5" height="8.8" fill="#fff"/><path d="M281.70 906.5 L285.70 910.9 L281.70 915.3 Z M285.50 906.5 L289.50 910.9 L285.50 915.3 Z " fill="#fff"/></g>
<text x="1465.8" y="1004.2" font-family="Liberation Sans, sans-serif" font-weight="400" font-size="14.4" fill="#fff" stroke="#fff" stroke-width="0.55" textLength="67.4" lengthAdjust="spacingAndGlyphs">AEGIS</text>
<text x="1465.6" y="1011.4" font-family="Liberation Sans, sans-serif" font-weight="700" font-size="5.6" fill="#c9d0d5" textLength="86.5" lengthAdjust="spacing">SOFTWARE</text>
<g transform="translate(0 0) scale(1)"><path d="M1535.8 990.2 L1548.8 980.1 L1562.3 990.2 L1548.8 1002 Z" fill="#e9362f"/>
<path d="M1548.8 980.1 L1562.3 990.2 L1559.3 992.5 L1553.4 988.9 V996.6 L1548.8 1000.7 Z" fill="#fff"/></g>
<path d="M575.8000000000001 264.5 L588.6 277.29999999999995 M588.6 264.5 L575.8000000000001 277.29999999999995" stroke="#8b959c" stroke-width="4.2" fill="none"/>
<path d="M1239.6 264.5 L1252.4 277.29999999999995 M1252.4 264.5 L1239.6 277.29999999999995" stroke="#000" stroke-width="4.2" fill="none"/>
<path d="M682.6 766.5 L695.4 779.3 M695.4 766.5 L682.6 779.3" stroke="#000" stroke-width="4.2" fill="none"/>
<path d="M1250.6 766.5 L1263.4 779.3 M1263.4 766.5 L1250.6 779.3" stroke="#000" stroke-width="4.2" fill="none"/></svg>
</body></html>
